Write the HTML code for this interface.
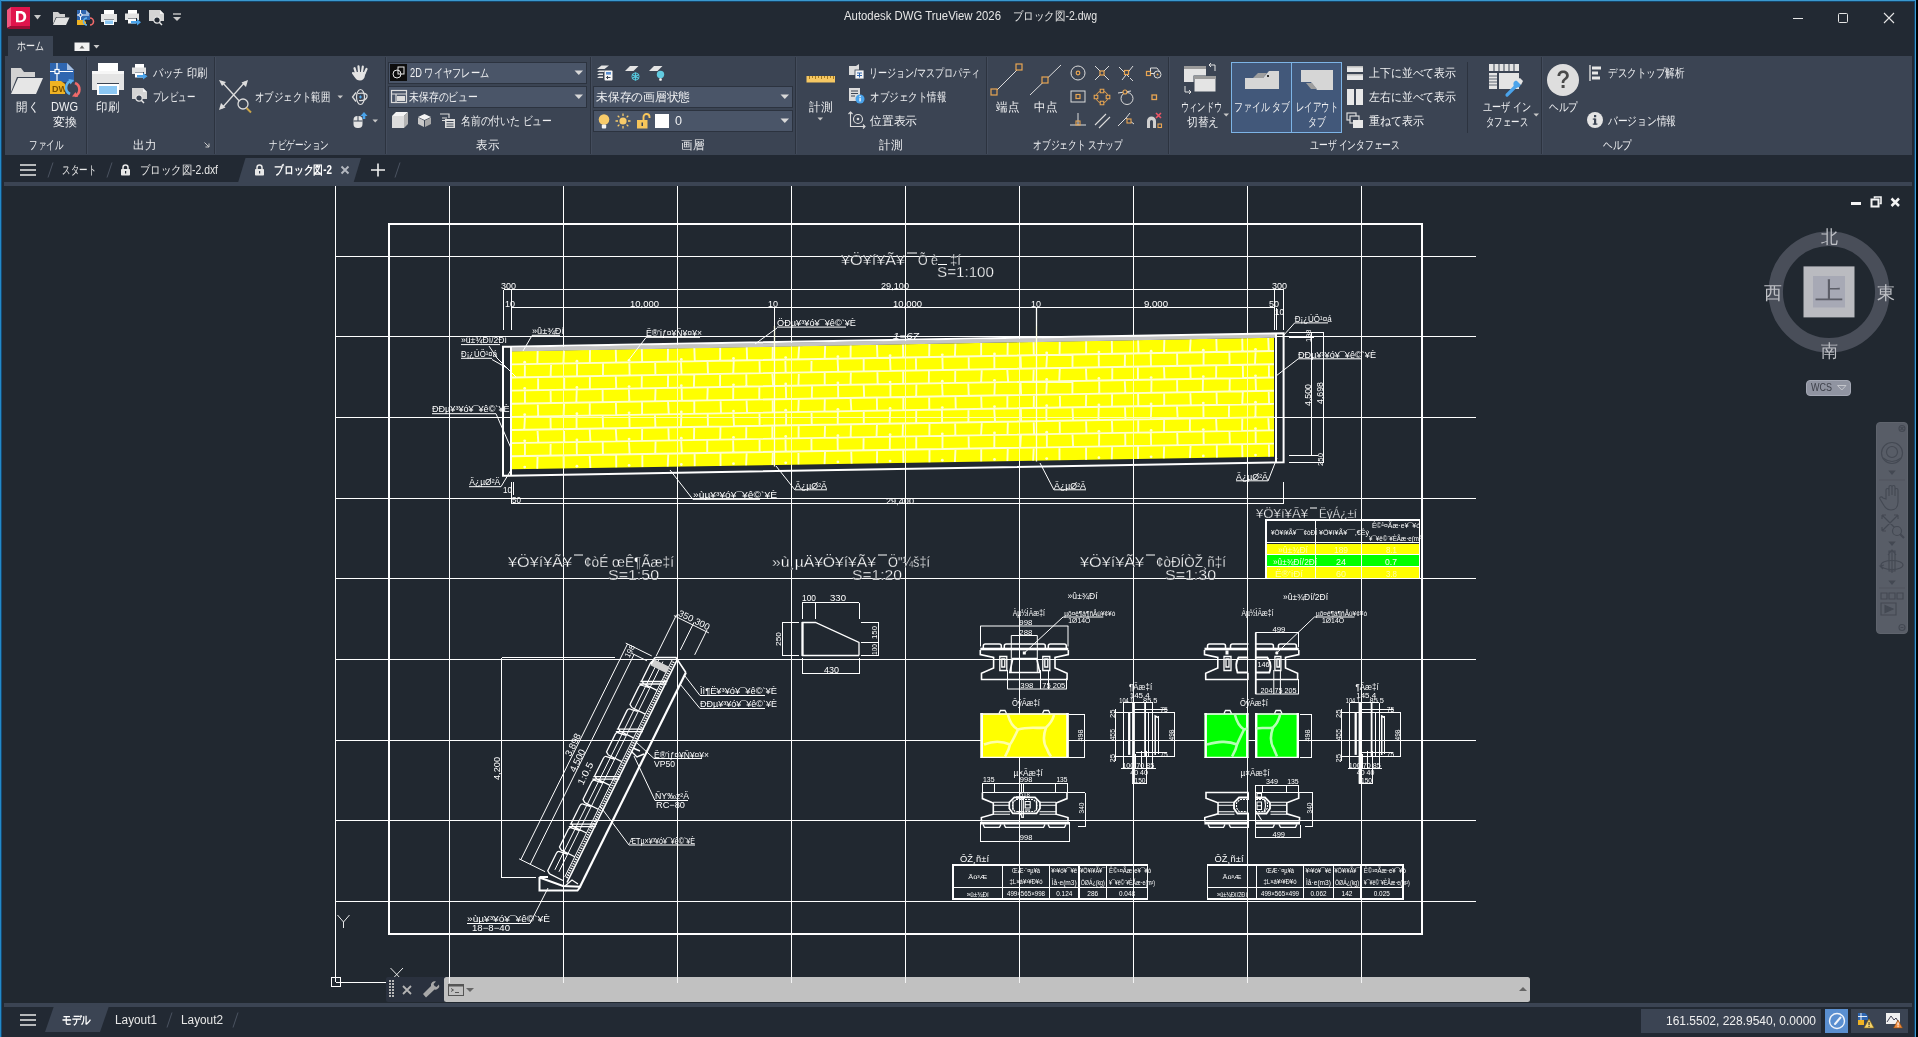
<!DOCTYPE html>
<html lang="ja"><head><meta charset="utf-8"><title>Autodesk DWG TrueView 2026 - ブロック図-2.dwg</title>
<style>
html,body{margin:0;padding:0;background:#000;overflow:hidden}
body{width:1918px;height:1037px;position:relative;font-family:"Liberation Sans",sans-serif;font-size:12px;color:#e4e6ea}
.a{position:absolute;display:block}
.t{position:absolute;display:block;white-space:nowrap;transform-origin:0 50%;letter-spacing:0}
#app{position:absolute;left:0;top:0;width:1918px;height:1037px;overflow:hidden;will-change:transform}
svg{overflow:visible}
svg text{white-space:pre}
</style></head><body><div id="app">
<div class="a" style="left:0px;top:0px;width:1916px;height:1037px;background:#222933;"></div>
<div class="a" style="left:1916px;top:0px;width:2px;height:1037px;background:#000;"></div>
<div class="a" style="left:0px;top:0px;width:1916px;height:1px;background:#3a98cf;"></div>
<div class="a" style="left:0px;top:1px;width:1916px;height:1px;background:#16456a;"></div>
<div class="a" style="left:0px;top:0px;width:1px;height:1037px;background:#2389c8;"></div>
<div class="a" style="left:1px;top:1px;width:1px;height:1036px;background:#154a72;"></div>
<div class="a" style="left:1915px;top:0px;width:1px;height:1037px;background:#3a98cf;"></div>
<div class="a" style="left:1914px;top:1px;width:1px;height:1036px;background:#16456a;"></div>
<svg class="a" style="left:6px;top:6px" width="28" height="24" viewBox="0 0 28 24"><path d="M1 4 L5 1 L5 20 L1 22Z" fill="#f0567f"/><path d="M5 1 H24 V20 H5Z" fill="#e0144c"/><path d="M1 22 L5 20 H24 L24 23 H3Z" fill="#a00c35"/><path d="M10 5 h4.2 c4 0 6 2.3 6 5.6 s-2 5.7-6 5.700 H10Z M12.600 7.400 v7 h1.500 c2.300 0 3.400-1.300 3.400-3.500 s-1.100-3.500-3.400-3.500Z" fill="#fff"/></svg>
<svg class="a" style="left:34px;top:15px" width="8" height="5" viewBox="0 0 8 5"><path d="M0 0 H7 L3.500 4.500Z" fill="#c8c8c8"/></svg>
<svg class="a" style="left:52px;top:11px" width="18" height="15" viewBox="0 0 18 15"><path d="M1 1 H6 L8 3 H13 V6 H4 L1 13Z" fill="#d0d0d0"/><path d="M4.500 6.500 H17.500 L14 14 H1Z" fill="#e2e2e2"/></svg>
<svg class="a" style="left:76px;top:9px" width="18" height="18" viewBox="0 0 18 18"><path d="M1 1 H10 L14 5 V11 H1Z" fill="#2f66b0"/><path d="M10 1 L14 5 H10Z" fill="#9ab6dc"/><path d="M1 11 H8 L10 13 V16 H1Z" fill="#f0b323"/><path d="M4.500 1 V11 M1 6 H13" stroke="#fff" stroke-width="1" fill="none"/><circle cx="4.500" cy="6" r="1.600" fill="#2f66b0" stroke="#fff"/><path d="M11 9 a3.500 3.500 0 0 0 0 7" stroke="#5db2ee" stroke-width="1.600" fill="none"/><path d="M14 9 a3.500 3.500 0 0 1 0 7" stroke="#f06a6a" stroke-width="1.600" fill="none"/></svg>
<svg class="a" style="left:100px;top:9px" width="18" height="18" viewBox="0 0 18 18"><rect x="4" y="1" width="10" height="5" fill="#fff"/><path d="M1 5 H17 V13 H14 V10 H4 V13 H1Z" fill="#e2e2e2"/><rect x="4" y="10.500" width="10" height="5.500" fill="#fff"/><rect x="5" y="11.500" width="8" height="3.500" fill="#8cc8f4"/></svg>
<svg class="a" style="left:124px;top:9px" width="20" height="18" viewBox="0 0 20 18"><rect x="4" y="1" width="9" height="4" fill="#fff"/><path d="M1 4.500 H15 V11 H13 V9 H4 V11 H1Z" fill="#e2e2e2"/><rect x="4" y="9.500" width="8" height="5" fill="#fff"/><path d="M7 12 H13 V10 L17 13.200 L13 16.500 V14.500 H7Z" fill="#4aa3ea"/></svg>
<svg class="a" style="left:148px;top:9px" width="18" height="18" viewBox="0 0 18 18"><path d="M1 1 H12 L16 5 V12 H1Z" fill="#d4d4d4"/><path d="M12 1 L16 5 H12Z" fill="#f4f4f4"/><circle cx="9" cy="11" r="3.200" fill="#222933" stroke="#e8e8e8" stroke-width="1.200"/><path d="M11.300 13.300 L14 16" stroke="#e8e8e8" stroke-width="1.500"/></svg>
<svg class="a" style="left:172px;top:13px" width="10" height="9" viewBox="0 0 10 9"><path d="M1 1 H9" stroke="#c8c8c8" stroke-width="1.400"/><path d="M1 4 H9 L5 8Z" fill="#c8c8c8"/></svg>
<svg class="a" style="left:1790px;top:10px" width="16" height="16" viewBox="0 0 16 16"><path d="M3 8.500 H13" stroke="#e6e6e6" stroke-width="1"/></svg>
<svg class="a" style="left:1835px;top:10px" width="16" height="16" viewBox="0 0 16 16"><rect x="3.500" y="3.500" width="9" height="9" rx="1" fill="none" stroke="#e6e6e6" stroke-width="1"/></svg>
<svg class="a" style="left:1881px;top:10px" width="16" height="16" viewBox="0 0 16 16"><path d="M3 3 L13 13 M13 3 L3 13" stroke="#e6e6e6" stroke-width="1.100"/></svg>
<div class="a" style="left:8px;top:36px;width:45px;height:20px;background:#3b4453;"></div>
<svg class="a" style="left:74px;top:42px" width="17" height="10" viewBox="0 0 17 10"><rect x="0.500" y="0.500" width="15" height="8.500" fill="#f2f2f2"/><path d="M5.500 6.500 L8 3.500 L10.500 6.500Z" fill="#666"/></svg>
<svg class="a" style="left:93px;top:45px" width="8" height="5" viewBox="0 0 8 5"><path d="M0.500 0 H6.500 L3.500 3.500Z" fill="#c8c8c8"/></svg>
<div class="a" style="left:5px;top:56px;width:1907px;height:99px;background:#3b4453;"></div>
<div class="a" style="left:86px;top:57px;width:1px;height:97px;background:#2c333f;"></div>
<div class="a" style="left:87px;top:57px;width:1px;height:97px;background:#434c5c;"></div>
<div class="a" style="left:214px;top:57px;width:1px;height:97px;background:#2c333f;"></div>
<div class="a" style="left:215px;top:57px;width:1px;height:97px;background:#434c5c;"></div>
<div class="a" style="left:385px;top:57px;width:1px;height:97px;background:#2c333f;"></div>
<div class="a" style="left:386px;top:57px;width:1px;height:97px;background:#434c5c;"></div>
<div class="a" style="left:590px;top:57px;width:1px;height:97px;background:#2c333f;"></div>
<div class="a" style="left:591px;top:57px;width:1px;height:97px;background:#434c5c;"></div>
<div class="a" style="left:795px;top:57px;width:1px;height:97px;background:#2c333f;"></div>
<div class="a" style="left:796px;top:57px;width:1px;height:97px;background:#434c5c;"></div>
<div class="a" style="left:986px;top:57px;width:1px;height:97px;background:#2c333f;"></div>
<div class="a" style="left:987px;top:57px;width:1px;height:97px;background:#434c5c;"></div>
<div class="a" style="left:1168px;top:57px;width:1px;height:97px;background:#2c333f;"></div>
<div class="a" style="left:1169px;top:57px;width:1px;height:97px;background:#434c5c;"></div>
<div class="a" style="left:1541px;top:57px;width:1px;height:97px;background:#2c333f;"></div>
<div class="a" style="left:1542px;top:57px;width:1px;height:97px;background:#434c5c;"></div>
<div class="a" style="left:1467px;top:62px;width:1px;height:71px;background:#2c333f;"></div>
<svg class="a" style="left:9px;top:64px" width="36" height="32" viewBox="0 0 36 32"><path d="M2 4 H12 L15 8 H26 V13 H8 L2 28Z" fill="#d2d2d2"/><path d="M9 14 H34 L27 30 H2Z" fill="#e6e6e6"/></svg>
<svg class="a" style="left:49px;top:62px" width="34" height="36" viewBox="0 0 34 36"><path d="M1 1 H18 L25 8 V20 H1Z" fill="#2f66b0"/><path d="M18 1 L25 8 H18Z" fill="#a9c0e0"/><path d="M8 1 V19 M1 9.500 H24" stroke="#fff" stroke-width="1.200" fill="none"/><rect x="6" y="7.500" width="4" height="4" fill="#2f66b0" stroke="#fff" stroke-width="1.200"/><path d="M1 19 H12 L16 22 V32 H1Z" fill="#f0b323"/><text x="3" y="29.500" font-family="Liberation Sans" font-weight="bold" font-size="9" fill="#7a5200">DW</text><path d="M22 19 a7 7 0 0 0 -1 13" stroke="#5db2ee" stroke-width="2.600" fill="none"/><path d="M19.500 17 L25 18 L21.500 22.500Z" fill="#5db2ee"/><path d="M26 21 a7 7 0 0 1 0 13" stroke="#f06a6a" stroke-width="2.600" fill="none"/><path d="M29 35 L23 34.500 L26.500 30Z" fill="#f06a6a"/></svg>
<svg class="a" style="left:91px;top:62px" width="34" height="34" viewBox="0 0 34 34"><rect x="7" y="1" width="20" height="10" fill="#fff"/><path d="M1 9 H33 V28 H28 V21 H6 V28 H1Z" fill="#e4e4e4"/><path d="M1 9 H33 V12 H1Z" fill="#f6f6f6"/><rect x="6" y="22" width="22" height="11" fill="#fff"/><rect x="8" y="24" width="18" height="8" fill="#8cc8f4"/></svg>
<svg class="a" style="left:131px;top:63px" width="18" height="18" viewBox="0 0 18 18"><rect x="4" y="1" width="9" height="4" fill="#fff"/><path d="M1 4.500 H15 V11 H13 V9 H4 V11 H1Z" fill="#e2e2e2"/><rect x="4" y="9.500" width="8" height="5" fill="#fff"/><path d="M6 12 H12 V10 L16.500 13.200 L12 16.500 V14.500 H6Z" fill="#4aa3ea"/></svg>
<svg class="a" style="left:131px;top:87px" width="18" height="18" viewBox="0 0 18 18"><path d="M1 1 H12 L16 5 V12 H1Z" fill="#d4d4d4"/><path d="M12 1 L16 5 H12Z" fill="#f4f4f4"/><circle cx="8" cy="11" r="3.200" fill="#3b4453" stroke="#e8e8e8" stroke-width="1.200"/><path d="M10.300 13.300 L13 16" stroke="#e8e8e8" stroke-width="1.500"/></svg>
<svg class="a" style="left:203px;top:141px" width="8" height="8" viewBox="0 0 8 8"><path d="M1.500 1.500 L6 6 M6 2.500 V6 H2.500" stroke="#c8c8c8" stroke-width="1" fill="none"/></svg>
<svg class="a" style="left:218px;top:78px" width="36" height="36" viewBox="0 0 36 36"><path d="M4 4 L24 26 M27 4 L4 30" stroke="#dcdcdc" stroke-width="1.300" fill="none"/><path d="M1 2 L8 4 L4 8Z M30 2 L28 9 L23.500 4.500Z M1 32 L3 25 L7.500 29.500Z" fill="#dcdcdc"/><circle cx="25" cy="26" r="5" fill="#3b4453" stroke="#dcdcdc" stroke-width="1.300"/><path d="M28.500 30 L33 34.500" stroke="#c9a44a" stroke-width="2"/></svg>
<svg class="a" style="left:337px;top:95px" width="7" height="5" viewBox="0 0 7 5"><path d="M0.500 0.500 H6 L3.200 3.500Z" fill="#c8c8c8"/></svg>
<svg class="a" style="left:351px;top:64px" width="18" height="18" viewBox="0 0 18 18"><g stroke="#e4e4e4" stroke-width="2.200" stroke-linecap="round"><path d="M5 9 L3.500 4.200 M8 8 L7.500 2.300 M11 8 L11.800 2.600 M13.500 9.500 L15.500 5"/></g><path d="M4 8 H14.500 L14 11.500 C13.500 15 11.500 16.500 9 16.500 C6.500 16.500 5 15.500 3.500 13 L1 9.500 C.7 8.300 2 7.600 3 8.600Z" fill="#e4e4e4"/></svg>
<svg class="a" style="left:351px;top:88px" width="18" height="18" viewBox="0 0 18 18"><path d="M5 4.500 L1.500 9 L5 13.500" fill="none" stroke="#dcdcdc" stroke-width="1.300"/><ellipse cx="9.500" cy="9" rx="4" ry="7.500" fill="none" stroke="#dcdcdc" stroke-width="1.200"/><path d="M7 5.500 Q17 4 16 9 Q15 13 8 12.500" fill="none" stroke="#dcdcdc" stroke-width="1.200"/><path d="M9.500 7.500 v3 M8 9 h3" stroke="#56a8e8" stroke-width="1"/></svg>
<svg class="a" style="left:351px;top:111px" width="18" height="18" viewBox="0 0 18 18"><rect x="2.500" y="5" width="9" height="12" rx="4" fill="#e4e4e4"/><path d="M7 5 V10 M2.500 10 H11.500" stroke="#3b4453" stroke-width="1"/><path d="M13 1 L16.500 5 H14.300 V8 H11.700 V5 H9.500Z" fill="#4aa3ea"/></svg>
<svg class="a" style="left:372px;top:119px" width="7" height="5" viewBox="0 0 7 5"><path d="M0.500 0.500 H6 L3.200 3.500Z" fill="#c8c8c8"/></svg>
<div class="a" style="left:388px;top:62px;width:199px;height:22px;background:#4a5568;border:1px solid #2c333f;box-sizing:border-box"></div>
<div class="a" style="left:388px;top:86px;width:199px;height:22px;background:#4a5568;border:1px solid #2c333f;box-sizing:border-box"></div>
<svg class="a" style="left:390px;top:64px" width="18" height="18" viewBox="0 0 18 18"><rect x="0" y="0" width="17" height="17" fill="#0d0d0d"/><circle cx="7" cy="10" r="4" fill="none" stroke="#e8e8e8" stroke-width="1"/><rect x="8" y="3" width="6" height="7" fill="none" stroke="#e8e8e8" stroke-width="1"/></svg>
<svg class="a" style="left:574px;top:70px" width="10" height="6" viewBox="0 0 10 6"><path d="M0.500 0.500 H9 L4.800 5Z" fill="#d8d8d8"/></svg>
<svg class="a" style="left:390px;top:88px" width="18" height="18" viewBox="0 0 18 18"><rect x="1.500" y="2.500" width="15" height="12" fill="none" stroke="#dcdcdc" stroke-width="1.200"/><path d="M1.500 6 H16.500 M6 6 V14.500" stroke="#dcdcdc" stroke-width="1.200"/><rect x="7" y="8" width="8" height="5" fill="#dcdcdc"/></svg>
<svg class="a" style="left:574px;top:94px" width="10" height="6" viewBox="0 0 10 6"><path d="M0.500 0.500 H9 L4.800 5Z" fill="#d8d8d8"/></svg>
<svg class="a" style="left:391px;top:111px" width="18" height="19" viewBox="0 0 18 19"><path d="M1 5 L5 1 H17 L13 5Z" fill="#f4f4f4"/><rect x="1" y="5" width="12" height="12" fill="#dcdcdc"/><path d="M13 5 L17 1 V13 L13 17Z" fill="#b4b4b4"/></svg>
<svg class="a" style="left:417px;top:113px" width="15" height="15" viewBox="0 0 15 15"><path d="M7.500 1 L14 4 L7.500 7 L1 4Z" fill="#f4f4f4"/><path d="M1 4.500 L7 7.500 V14 L1 11Z" fill="#c8c8c8"/><path d="M14 4.500 L8 7.500 V14 L14 11Z" fill="#a8a8a8"/></svg>
<svg class="a" style="left:439px;top:113px" width="17" height="16" viewBox="0 0 17 16"><path d="M1 1 H10 V5" fill="none" stroke="#dcdcdc" stroke-width="1.200"/><path d="M3 5 H8 M3 7.500 H6" stroke="#dcdcdc" stroke-width="1"/><rect x="6" y="6" width="10" height="9" fill="#dcdcdc"/><path d="M7.500 8.500 H14.500 M7.500 11 H14.500 M7.500 13.200 H14.500" stroke="#3b4453" stroke-width="1"/></svg>
<svg class="a" style="left:595px;top:64px" width="18" height="18" viewBox="0 0 18 18"><path d="M2 5 L6.500 1.500 H14 L9.500 5Z" fill="#e4e4e4"/><path d="M2 8 L4 6.500 H10 L9 8Z M2 11 L4 9.500 H8 L8 11Z M2 14 L4 12.500 H8 V14Z" fill="#e4e4e4"/><rect x="9.500" y="6.500" width="8" height="10" rx="1" fill="#f6f6f6"/><rect x="11" y="8" width="5" height="2.600" fill="#5b8fd0"/><path d="M15.500 13.500 H11.500 M13 12 L11.500 13.500 L13 15" stroke="#3b4453" stroke-width="1" fill="none"/></svg>
<svg class="a" style="left:623px;top:64px" width="18" height="18" viewBox="0 0 18 18"><path d="M2 7 L7 2 H15.500 L10.500 7Z" fill="#e4e4e4"/><g stroke="#56c8de" stroke-width="1.300"><path d="M12.500 8.500 v8 M9 10.500 l7 4 M16 10.500 l-7 4"/></g><circle cx="12.500" cy="12.500" r="3.600" fill="none" stroke="#56c8de" stroke-width=".9"/></svg>
<svg class="a" style="left:648px;top:64px" width="18" height="18" viewBox="0 0 18 18"><path d="M1 7 L6 2 H14.500 L9.500 7Z" fill="#e4e4e4"/><circle cx="12.500" cy="10.500" r="3.700" fill="#62cbe0"/><rect x="11.200" y="14.200" width="2.600" height="2.600" rx=".8" fill="#f4f4f4"/></svg>
<div class="a" style="left:593px;top:86px;width:200px;height:22px;background:#4a5568;border:1px solid #2c333f;box-sizing:border-box"></div>
<svg class="a" style="left:780px;top:94px" width="10" height="6" viewBox="0 0 10 6"><path d="M0.500 0.500 H9 L4.800 5Z" fill="#d8d8d8"/></svg>
<div class="a" style="left:593px;top:110px;width:200px;height:22px;background:#4a5568;border:1px solid #2c333f;box-sizing:border-box"></div>
<svg class="a" style="left:597px;top:112px" width="14" height="18" viewBox="0 0 14 18"><circle cx="7" cy="7.500" r="5.300" fill="#f8cb6a"/><rect x="4.800" y="12.500" width="4.400" height="4" rx="1" fill="#f4f4f4"/></svg>
<svg class="a" style="left:614px;top:112px" width="18" height="18" viewBox="0 0 18 18"><circle cx="9" cy="9" r="3.600" fill="#f8cb6a"/><path d="M9 1.500 V4 M9 14 V16.500 M1.500 9 H4 M14 9 H16.500 M3.700 3.700 L5.400 5.400 M12.600 12.600 L14.300 14.300 M14.300 3.700 L12.600 5.400 M3.700 14.300 L5.400 12.600" stroke="#f8cb6a" stroke-width="1.300"/></svg>
<svg class="a" style="left:635px;top:112px" width="16" height="18" viewBox="0 0 16 18"><path d="M8.500 8 V5 a3 3 0 0 1 6 0 V6" fill="none" stroke="#f8c65a" stroke-width="1.900"/><rect x="2" y="8" width="10.500" height="8.500" fill="#f8c65a"/><rect x="6.500" y="10.500" width="1.500" height="3.500" fill="#3b4453"/></svg>
<div class="a" style="left:655px;top:114px;width:14px;height:14px;background:#fff;"></div>
<svg class="a" style="left:780px;top:118px" width="10" height="6" viewBox="0 0 10 6"><path d="M0.500 0.500 H9 L4.800 5Z" fill="#d8d8d8"/></svg>
<svg class="a" style="left:805px;top:72px" width="32" height="14" viewBox="0 0 32 14"><rect x="1.500" y="4" width="28.500" height="6.500" fill="#f6c863"/><path d="M4.500 4 V7 M7.500 4 V6 M10.500 4 V7 M13.500 4 V6 M16.500 4 V7 M19.500 4 V6 M22.500 4 V7 M25.500 4 V6 M28.500 4 V7" stroke="#a87c1c" stroke-width="1"/></svg>
<svg class="a" style="left:817px;top:117px" width="7" height="5" viewBox="0 0 7 5"><path d="M0.500 0.500 H6 L3.200 3.500Z" fill="#c8c8c8"/></svg>
<svg class="a" style="left:848px;top:63px" width="18" height="18" viewBox="0 0 18 18"><path d="M1 3 H8 L11 1 V12 H1Z" fill="#dcdcdc"/><rect x="7" y="7" width="9" height="9" fill="#f4f4f4" stroke="#3b4453" stroke-width=".8"/><path d="M9 10 H14 M9 12.500 H14 M11.500 10 V14.500" stroke="#2f66b0" stroke-width="1"/></svg>
<svg class="a" style="left:848px;top:87px" width="18" height="18" viewBox="0 0 18 18"><rect x="1" y="1" width="11" height="13" fill="#dcdcdc"/><path d="M3 4 H10 M3 6.500 H10 M3 9 H7" stroke="#3b4453" stroke-width="1"/><circle cx="12" cy="12" r="4.500" fill="#4aa3ea"/><rect x="11.400" y="10.800" width="1.300" height="3.600" fill="#fff"/><rect x="11.400" y="8.800" width="1.300" height="1.300" fill="#fff"/></svg>
<svg class="a" style="left:848px;top:111px" width="18" height="18" viewBox="0 0 18 18"><path d="M2.500 1 V15.500 H17 M0.500 3 L2.500 1 L4.500 3 M15 13.500 L17 15.500 L15 17.500" fill="none" stroke="#dcdcdc" stroke-width="1.100"/><circle cx="10" cy="8" r="4.500" fill="none" stroke="#dcdcdc" stroke-width="1.100"/><circle cx="10" cy="8" r="1.300" fill="#dcdcdc"/></svg>
<svg class="a" style="left:989px;top:62px" width="36" height="36" viewBox="0 0 36 36"><path d="M6 30 L30 6" stroke="#dcdcdc" stroke-width="1"/><rect x="27" y="2" width="6" height="6" fill="#3b4453" stroke="#e8a552" stroke-width="1.200"/><rect x="2" y="27" width="6" height="6" fill="#3b4453" stroke="#e8a552" stroke-width="1.200"/></svg>
<svg class="a" style="left:1028px;top:62px" width="36" height="36" viewBox="0 0 36 36"><path d="M2 33 L33 3" stroke="#dcdcdc" stroke-width="1"/><rect x="14" y="15" width="6" height="6" fill="#3b4453" stroke="#e8a552" stroke-width="1.200"/></svg>
<svg class="a" style="left:1069px;top:64px" width="18" height="18" viewBox="0 0 18 18"><circle cx="9" cy="9" r="7" fill="none" stroke="#dcdcdc"/><circle cx="9" cy="9" r="1.800" fill="none" stroke="#e8a552" stroke-width="1.200"/></svg>
<svg class="a" style="left:1093px;top:64px" width="18" height="18" viewBox="0 0 18 18"><path d="M2 2 L16 16 M16 2 L2 16" stroke="#dcdcdc"/><rect x="7" y="7" width="4" height="4" fill="#3b4453" stroke="#e8a552" stroke-width="1.200"/></svg>
<svg class="a" style="left:1117px;top:64px" width="18" height="18" viewBox="0 0 18 18"><path d="M2 3 L12 13 M16 2 L5 16 M13 14 L16 17" stroke="#dcdcdc" stroke-dasharray="0"/><rect x="7.500" y="6.500" width="4" height="4" fill="#3b4453" stroke="#e8a552" stroke-width="1.200"/></svg>
<svg class="a" style="left:1145px;top:64px" width="18" height="18" viewBox="0 0 18 18"><rect x="1.500" y="7.500" width="4" height="4" fill="none" stroke="#e8a552" stroke-width="1.200"/><path d="M5.500 7.500 V4 H12 L15 8 M5.500 9.500 H9" stroke="#dcdcdc" fill="none"/><circle cx="12.500" cy="10.500" r="3.500" fill="none" stroke="#dcdcdc"/><circle cx="12.500" cy="10.500" r="1" fill="#e8a552"/></svg>
<svg class="a" style="left:1069px;top:88px" width="18" height="18" viewBox="0 0 18 18"><rect x="2" y="3" width="14" height="11" fill="none" stroke="#dcdcdc"/><rect x="7" y="6.500" width="4" height="4" fill="none" stroke="#e8a552" stroke-width="1.200"/></svg>
<svg class="a" style="left:1093px;top:88px" width="18" height="18" viewBox="0 0 18 18"><circle cx="9" cy="9" r="6" fill="none" stroke="#e8a552"/><g fill="#3b4453" stroke="#e8a552" stroke-width="1.100"><path d="M7.200 1.200h3.600v3.600h-3.600zM7.200 13.200h3.600v3.600h-3.600zM1.200 7.200h3.600v3.600h-3.600zM13.200 7.200h3.600v3.600h-3.600z"/></g></svg>
<svg class="a" style="left:1117px;top:88px" width="18" height="18" viewBox="0 0 18 18"><circle cx="10" cy="10.500" r="6" fill="none" stroke="#dcdcdc"/><path d="M1 5 L14 3" stroke="#dcdcdc"/><circle cx="8" cy="4" r="2" fill="#3b4453" stroke="#e8a552" stroke-width="1.100"/></svg>
<svg class="a" style="left:1145px;top:88px" width="18" height="18" viewBox="0 0 18 18"><rect x="7" y="7" width="4.500" height="4.500" fill="none" stroke="#e8a552" stroke-width="1.300"/></svg>
<svg class="a" style="left:1069px;top:112px" width="18" height="18" viewBox="0 0 18 18"><path d="M9 1 V13 M1 13 H17" stroke="#dcdcdc"/><rect x="7" y="9" width="4" height="4" fill="none" stroke="#e8a552" stroke-width="1.100"/></svg>
<svg class="a" style="left:1093px;top:112px" width="18" height="18" viewBox="0 0 18 18"><path d="M2 13 L13 2 M6 16 L17 5" stroke="#dcdcdc" stroke-width="1.100"/></svg>
<svg class="a" style="left:1117px;top:112px" width="18" height="18" viewBox="0 0 18 18"><path d="M1 14 L9 6 L17 12 M9 6 L13 1" stroke="#dcdcdc" fill="none"/><rect x="10" y="7" width="4" height="4" fill="#3b4453" stroke="#e8a552" stroke-width="1.100"/></svg>
<svg class="a" style="left:1145px;top:112px" width="18" height="18" viewBox="0 0 18 18"><path d="M2 16 V9 a4.500 4.500 0 0 1 9 0 V16 H8 V9.500 a1.500 1.500 0 0 0 -3 0 V16Z" fill="#d0d0d0"/><path d="M11 1 L16 6 M16 1 L11 6" stroke="#ee5566" stroke-width="1.600"/><rect x="13" y="12" width="3.500" height="3.500" fill="none" stroke="#e8a552" stroke-width="1.100"/></svg>
<svg class="a" style="left:1183px;top:63px" width="36" height="34" viewBox="0 0 36 34"><rect x="1" y="3" width="22" height="16" fill="#e4e4e4"/><rect x="1" y="3" width="22" height="3" fill="#9a9a9a"/><rect x="11" y="13" width="22" height="16" fill="#e4e4e4" stroke="#3b4453" stroke-width="1"/><rect x="11" y="13" width="22" height="3" fill="#9a9a9a"/><path d="M26 2 H32 V8 M28 0 L26 2 L28 4" stroke="#e4e4e4" fill="none"/><path d="M2 23 V29 H8 M6 27 L8 29 L6 31" stroke="#e4e4e4" fill="none"/></svg>
<svg class="a" style="left:1223px;top:113px" width="7" height="5" viewBox="0 0 7 5"><path d="M0.500 0.500 H6 L3.200 3.500Z" fill="#c8c8c8"/></svg>
<div class="a" style="left:1231px;top:62px;width:61px;height:71px;background:#42587a;border:1px solid #7db4e6;box-sizing:border-box"></div>
<div class="a" style="left:1292px;top:62px;width:50px;height:71px;background:#42587a;border:1px solid #7db4e6;border-left:none;box-sizing:border-box"></div>
<svg class="a" style="left:1243px;top:68px" width="38" height="24" viewBox="0 0 38 24"><path d="M2 21 V10 H20 L26 3 H36 V21Z" fill="#d6d6d6"/><path d="M10 10 L15 5 H24 L20 10Z" fill="#9e9e9e"/><rect x="24" y="7" width="2" height="2" fill="#333"/></svg>
<svg class="a" style="left:1299px;top:68px" width="38" height="24" viewBox="0 0 38 24"><path d="M2 2 H34 V22 H18 L12 14 H2Z" fill="#d6d6d6"/><path d="M7 15 H13 L18 21 H12Z" fill="#9e9e9e"/></svg>
<svg class="a" style="left:1346px;top:64px" width="18" height="18" viewBox="0 0 18 18"><rect x="1" y="2" width="16" height="6" fill="#e8e8e8"/><rect x="1" y="10" width="16" height="6" fill="#e8e8e8"/><rect x="1" y="2" width="16" height="1.500" fill="#bdbdbd"/><rect x="1" y="10" width="16" height="1.500" fill="#bdbdbd"/></svg>
<svg class="a" style="left:1346px;top:88px" width="18" height="18" viewBox="0 0 18 18"><rect x="1" y="1" width="7" height="16" fill="#e8e8e8"/><rect x="10" y="1" width="7" height="16" fill="#e8e8e8"/></svg>
<svg class="a" style="left:1346px;top:112px" width="18" height="18" viewBox="0 0 18 18"><rect x="1" y="1" width="9" height="7" fill="none" stroke="#dcdcdc" stroke-width="1.200"/><rect x="4" y="4" width="9" height="7" fill="#3b4453" stroke="#dcdcdc" stroke-width="1.200"/><rect x="7" y="8" width="10" height="8" fill="#e8e8e8"/></svg>
<svg class="a" style="left:1487px;top:62px" width="38" height="36" viewBox="0 0 38 36"><rect x="2" y="2" width="30" height="7" fill="#e4e4e4"/><path d="M7 2 V9 M12 2 V9 M17 2 V9 M22 2 V9 M27 2 V9" stroke="#3b4453"/><rect x="2" y="11" width="8" height="16" fill="#e4e4e4"/><path d="M2 14 H10 M2 17 H10 M2 20 H10 M2 23 H10" stroke="#3b4453" stroke-width=".8"/><rect x="12" y="11" width="20" height="16" fill="#e4e4e4"/><path d="M20 33 L29 24" stroke="#4aa3ea" stroke-width="3.200" stroke-linecap="round"/><circle cx="30" cy="22" r="3.600" fill="#4aa3ea"/><path d="M29 18 L34 23 L36 19 L33 16Z" fill="#e4e4e4"/></svg>
<svg class="a" style="left:1533px;top:113px" width="7" height="5" viewBox="0 0 7 5"><path d="M0.500 0.500 H6 L3.200 3.500Z" fill="#c8c8c8"/></svg>
<svg class="a" style="left:1546px;top:63px" width="34" height="34" viewBox="0 0 34 34"><circle cx="17" cy="17" r="16" fill="#dedede"/><path d="M11.500 13 c0-3.500 2.500-5.500 5.700-5.500 c3.300 0 5.600 2 5.600 5 c0 2.200-1.200 3.300-2.700 4.300 c-1.400 1-1.800 1.600-1.800 3.200 h-2.600 c0-2.300.6-3.300 2.200-4.500 c1.400-1 2.100-1.600 2.100-2.900 c0-1.600-1.100-2.600-2.800-2.600 c-1.800 0-2.900 1.100-3 3Z M15.600 22 h3 v3 h-3Z" fill="#4a4a4a"/></svg>
<svg class="a" style="left:1588px;top:64px" width="16" height="18" viewBox="0 0 16 18"><path d="M2 1 V17" stroke="#dcdcdc" stroke-width="1.400"/><rect x="4" y="2.500" width="9" height="3" fill="#e8e8e8"/><rect x="4" y="7.500" width="6" height="3" fill="#e8e8e8"/><rect x="4" y="12.500" width="8" height="3" fill="#e8e8e8"/></svg>
<svg class="a" style="left:1586px;top:111px" width="18" height="18" viewBox="0 0 18 18"><circle cx="9" cy="9" r="8" fill="#e4e4e4"/><rect x="8" y="7.500" width="2.200" height="6" fill="#3b4453"/><rect x="8" y="4" width="2.200" height="2.200" fill="#3b4453"/><rect x="6.800" y="7.500" width="2" height="1.200" fill="#3b4453"/><rect x="6.800" y="12.500" width="4.600" height="1.200" fill="#3b4453"/></svg>
<svg class="a" style="left:18px;top:162px" width="20" height="16" viewBox="0 0 20 16"><path d="M2 3 H18 M2 8 H18 M2 13 H18" stroke="#e8e8e8" stroke-width="1.700"/></svg>
<svg class="a" style="left:44px;top:158px" width="12" height="24" viewBox="0 0 12 24"><path d="M9 4.500 L4 19.500" stroke="#4b5361" stroke-width="1"/></svg>
<svg class="a" style="left:103px;top:158px" width="12" height="24" viewBox="0 0 12 24"><path d="M9 4.500 L4 19.500" stroke="#4b5361" stroke-width="1"/></svg>
<svg class="a" style="left:120px;top:163px" width="11" height="13" viewBox="0 0 11 13"><path d="M3 6 V4.500 a2.500 2.500 0 0 1 5 0 V6" fill="none" stroke="#e8e8e8" stroke-width="1.500"/><rect x="1" y="6" width="9" height="6.500" rx=".8" fill="#e8e8e8"/><rect x="5" y="8" width="1.200" height="2.500" fill="#222933"/></svg>
<svg class="a" style="left:232px;top:155px" width="134" height="31" viewBox="0 0 134 31"><path d="M5 31 L13.500 3 H129 L120.500 31Z" fill="#3b4453"/></svg>
<svg class="a" style="left:254px;top:163px" width="11" height="13" viewBox="0 0 11 13"><path d="M3 6 V4.500 a2.500 2.500 0 0 1 5 0 V6" fill="none" stroke="#e8e8e8" stroke-width="1.500"/><rect x="1" y="6" width="9" height="6.500" rx=".8" fill="#e8e8e8"/><rect x="5" y="8" width="1.200" height="2.500" fill="#3b4453"/></svg>
<svg class="a" style="left:339px;top:164px" width="12" height="12" viewBox="0 0 12 12"><path d="M2.500 2.500 L9.500 9.500 M9.500 2.500 L2.500 9.500" stroke="#b4b8c0" stroke-width="1.900"/></svg>
<svg class="a" style="left:369px;top:162px" width="18" height="16" viewBox="0 0 18 16"><path d="M9 1.500 V14.500 M2 8 H16" stroke="#f0f0f0" stroke-width="1.600"/></svg>
<svg class="a" style="left:391px;top:158px" width="12" height="24" viewBox="0 0 12 24"><path d="M9 4.500 L4 19.500" stroke="#4b5361" stroke-width="1"/></svg>
<div class="a" style="left:4px;top:182px;width:1908px;height:4px;background:#3b4453;"></div>
<div class="a" style="left:2px;top:186px;width:1912px;height:817px;background:#212830;"></div>
<div class="a" style="left:4px;top:1003px;width:1908px;height:4px;background:#3b4453;"></div>
<svg class="a" style="left:18px;top:1012px" width="20" height="16" viewBox="0 0 20 16"><path d="M2 3 H18 M2 8 H18 M2 13 H18" stroke="#e8e8e8" stroke-width="1.700"/></svg>
<svg class="a" style="left:42px;top:1005px" width="70" height="28" viewBox="0 0 70 28"><path d="M3 27 L12 1 H67 L58 27Z" fill="#3b4453"/></svg>
<svg class="a" style="left:163px;top:1008px" width="12" height="24" viewBox="0 0 12 24"><path d="M9 4.500 L4 19.500" stroke="#4b5361" stroke-width="1"/></svg>
<svg class="a" style="left:229px;top:1008px" width="12" height="24" viewBox="0 0 12 24"><path d="M9 4.500 L4 19.500" stroke="#4b5361" stroke-width="1"/></svg>
<div class="a" style="left:1641px;top:1009px;width:180px;height:24px;background:#3b4453;"></div>
<div class="a" style="left:1825px;top:1009px;width:23px;height:24px;background:#5a8fd0;"></div>
<svg class="a" style="left:1827px;top:1011px" width="20" height="20" viewBox="0 0 20 20"><circle cx="10" cy="10" r="7.500" fill="none" stroke="#f0f4fa" stroke-width="1.400"/><path d="M8 13 L13.500 6.500" stroke="#f0f4fa" stroke-width="2" stroke-linecap="round"/></svg>
<div class="a" style="left:1851px;top:1009px;width:57px;height:24px;background:#3b4453;"></div>
<svg class="a" style="left:1856px;top:1011px" width="20" height="20" viewBox="0 0 20 20"><path d="M2 2 H9 L12 5 V9 H2Z" fill="#2f66b0"/><path d="M2 9 H8 V14 H2Z" fill="#f0b323"/><path d="M5 2 V9 M2 5.500 H11" stroke="#fff" stroke-width=".9"/><path d="M13 8 L18 17 H8Z" fill="#f6d36a" stroke="#8a6a10" stroke-width=".6"/><rect x="12.500" y="11" width="1.100" height="3.200" fill="#333"/><rect x="12.500" y="15" width="1.100" height="1.100" fill="#333"/></svg>
<svg class="a" style="left:1884px;top:1011px" width="20" height="20" viewBox="0 0 20 20"><rect x="2" y="2" width="14" height="11" fill="#f0f0f0"/><path d="M3 11 L7 5 L10 9 L12 7 L15 12" stroke="#445" fill="none"/><path d="M14 9 L18.500 17 H9.500Z" fill="#f08a3c" stroke="#8a4a10" stroke-width=".6"/><rect x="13.500" y="11.500" width="1.100" height="3" fill="#fff"/><rect x="13.500" y="15.200" width="1.100" height="1" fill="#fff"/></svg>
<svg class="a" style="left:0;top:0" width="1918" height="1037" viewBox="0 0 1918 1037" font-family="'Liberation Sans',sans-serif"><text x="844" y="20.16" font-size="12" fill="#e6e6e6" textLength="157" lengthAdjust="spacingAndGlyphs">Autodesk DWG TrueView 2026</text><text x="1013" y="20.16" font-size="12" fill="#e6e6e6" textLength="84" lengthAdjust="spacingAndGlyphs">ブロック図-2.dwg</text><text x="17" y="50.16" font-size="12" fill="#f0f0f0" textLength="27" lengthAdjust="spacingAndGlyphs">ホーム</text><text x="16" y="110.66" font-size="12" fill="#f0f1f3" textLength="23" lengthAdjust="spacingAndGlyphs">開く</text><text x="51" y="110.66" font-size="12" fill="#f0f1f3" textLength="27" lengthAdjust="spacingAndGlyphs">DWG</text><text x="53" y="125.66" font-size="12" fill="#f0f1f3" textLength="24" lengthAdjust="spacingAndGlyphs">変換</text><text x="29" y="148.66" font-size="12" fill="#f0f1f3" textLength="34" lengthAdjust="spacingAndGlyphs">ファイル</text><text x="96" y="110.66" font-size="12" fill="#f0f1f3" textLength="23" lengthAdjust="spacingAndGlyphs">印刷</text><text x="153" y="76.66" font-size="12" fill="#f0f1f3" textLength="54" lengthAdjust="spacingAndGlyphs">バッチ 印刷</text><text x="153" y="100.66" font-size="12" fill="#f0f1f3" textLength="42" lengthAdjust="spacingAndGlyphs">プレビュー</text><text x="133" y="148.66" font-size="12" fill="#f0f1f3" textLength="23" lengthAdjust="spacingAndGlyphs">出力</text><text x="255" y="100.66" font-size="12" fill="#f0f1f3" textLength="75" lengthAdjust="spacingAndGlyphs">オブジェクト範囲</text><text x="269" y="148.66" font-size="12" fill="#f0f1f3" textLength="60" lengthAdjust="spacingAndGlyphs">ナビゲーション</text><text x="410" y="76.66" font-size="12" fill="#f0f1f3" textLength="79" lengthAdjust="spacingAndGlyphs">2D ワイヤフレーム</text><text x="409" y="100.66" font-size="12" fill="#f0f1f3" textLength="69" lengthAdjust="spacingAndGlyphs">未保存のビュー</text><text x="461" y="124.66" font-size="12" fill="#f0f1f3" textLength="91" lengthAdjust="spacingAndGlyphs">名前の付いた ビュー</text><text x="476" y="148.66" font-size="12" fill="#f0f1f3" textLength="23" lengthAdjust="spacingAndGlyphs">表示</text><text x="596" y="100.66" font-size="12" fill="#f0f1f3" textLength="94" lengthAdjust="spacingAndGlyphs">未保存の画層状態</text><text x="675" y="125.16" font-size="12" fill="#f0f1f3" textLength="7" lengthAdjust="spacingAndGlyphs">0</text><text x="681" y="148.66" font-size="12" fill="#f0f1f3" textLength="23" lengthAdjust="spacingAndGlyphs">画層</text><text x="809" y="110.66" font-size="12" fill="#f0f1f3" textLength="23" lengthAdjust="spacingAndGlyphs">計測</text><text x="869" y="76.66" font-size="12" fill="#f0f1f3" textLength="111" lengthAdjust="spacingAndGlyphs">リージョン/マスプロパティ</text><text x="870" y="100.66" font-size="12" fill="#f0f1f3" textLength="76" lengthAdjust="spacingAndGlyphs">オブジェクト情報</text><text x="870" y="124.66" font-size="12" fill="#f0f1f3" textLength="47" lengthAdjust="spacingAndGlyphs">位置表示</text><text x="879" y="148.66" font-size="12" fill="#f0f1f3" textLength="23" lengthAdjust="spacingAndGlyphs">計測</text><text x="996" y="110.66" font-size="12" fill="#f0f1f3" textLength="23" lengthAdjust="spacingAndGlyphs">端点</text><text x="1034" y="110.66" font-size="12" fill="#f0f1f3" textLength="23" lengthAdjust="spacingAndGlyphs">中点</text><text x="1033" y="148.66" font-size="12" fill="#f0f1f3" textLength="90" lengthAdjust="spacingAndGlyphs">オブジェクト スナップ</text><text x="1181" y="110.66" font-size="12" fill="#f0f1f3" textLength="41" lengthAdjust="spacingAndGlyphs">ウィンドウ</text><text x="1187" y="125.66" font-size="12" fill="#f0f1f3" textLength="32" lengthAdjust="spacingAndGlyphs">切替え</text><text x="1234" y="110.66" font-size="12" fill="#f0f1f3" textLength="56" lengthAdjust="spacingAndGlyphs">ファイル タブ</text><text x="1296" y="110.66" font-size="12" fill="#f0f1f3" textLength="42" lengthAdjust="spacingAndGlyphs">レイアウト</text><text x="1308" y="125.66" font-size="12" fill="#f0f1f3" textLength="18" lengthAdjust="spacingAndGlyphs">タブ</text><text x="1369" y="76.66" font-size="12" fill="#f0f1f3" textLength="87" lengthAdjust="spacingAndGlyphs">上下に並べて表示</text><text x="1369" y="100.66" font-size="12" fill="#f0f1f3" textLength="87" lengthAdjust="spacingAndGlyphs">左右に並べて表示</text><text x="1369" y="124.66" font-size="12" fill="#f0f1f3" textLength="55" lengthAdjust="spacingAndGlyphs">重ねて表示</text><text x="1483" y="110.66" font-size="12" fill="#f0f1f3" textLength="48" lengthAdjust="spacingAndGlyphs">ユーザ イン</text><text x="1486" y="125.66" font-size="12" fill="#f0f1f3" textLength="42" lengthAdjust="spacingAndGlyphs">タフェース</text><text x="1310" y="148.66" font-size="12" fill="#f0f1f3" textLength="90" lengthAdjust="spacingAndGlyphs">ユーザ インタフェース</text><text x="1549" y="110.66" font-size="12" fill="#f0f1f3" textLength="29" lengthAdjust="spacingAndGlyphs">ヘルプ</text><text x="1608" y="76.66" font-size="12" fill="#f0f1f3" textLength="76" lengthAdjust="spacingAndGlyphs">デスクトップ解析</text><text x="1608" y="124.66" font-size="12" fill="#f0f1f3" textLength="68" lengthAdjust="spacingAndGlyphs">バージョン情報</text><text x="1603" y="148.66" font-size="12" fill="#f0f1f3" textLength="29" lengthAdjust="spacingAndGlyphs">ヘルプ</text><text x="62" y="173.66" font-size="12" fill="#e8e8e8" textLength="34" lengthAdjust="spacingAndGlyphs">スタート</text><text x="140" y="173.66" font-size="12" fill="#e8e8e8" textLength="78" lengthAdjust="spacingAndGlyphs">ブロック図-2.dxf</text><text x="274" y="173.66" font-size="12" fill="#ffffff" font-weight="bold" textLength="58" lengthAdjust="spacingAndGlyphs">ブロック図-2</text><text x="62" y="1024.16" font-size="12" fill="#ffffff" font-weight="bold" textLength="29" lengthAdjust="spacingAndGlyphs">モデル</text><text x="115" y="1024.16" font-size="12" fill="#e8e8e8" textLength="42" lengthAdjust="spacingAndGlyphs">Layout1</text><text x="181" y="1024.16" font-size="12" fill="#e8e8e8" textLength="42" lengthAdjust="spacingAndGlyphs">Layout2</text><text x="1666" y="1025.16" font-size="12" fill="#f0f0f0" textLength="150" lengthAdjust="spacingAndGlyphs">161.5502, 228.9540, 0.0000</text></svg>
<svg class="a" style="left:0;top:0" width="1918" height="1037" viewBox="0 0 1918 1037" font-family="'Liberation Sans',sans-serif">
<g shape-rendering="crispEdges"><path d="M335.5 186V982M449.5 186V982.5M563.5 186V982.5M677.5 186V982.5M791.5 186V982.5M905.5 186V982.5M1019.5 186V982.5M1133.5 186V982.5M1247.5 186V982.5M1361.5 186V982.5M335 256.5H1476M335 336.5H1476M335 417.5H1476M335 498.5H1476M335 578.5H1476M335 659.5H1476M335 740.5H1476M335 820.5H1476M335 901.5H1476" stroke="#ffffff" stroke-width="1" fill="none" />
<path d="M389 224H1422V934H389Z" stroke="#ffffff" stroke-width="2" fill="none" />
</g>
<defs><clipPath id="wc"><path d="M512 351.3L1274 337.8L1274 456.8L512 469.3Z"/></clipPath></defs>
<path d="M512 351.3L1274 337.8L1274 456.8L512 469.3Z" fill="#ffff00"/>
<g clip-path="url(#wc)"><path d="M512 364.41L1274 351.02M512 377.52L1274 364.24M512 390.63L1274 377.47M512 403.74L1274 390.69M512 416.86L1274 403.91M512 429.97L1274 417.13M512 443.08L1274 430.36M512 456.19L1274 443.58M537.66 350.84L537.38 363.96M564.02 350.38L563.39 363.5M590.03 349.92L589.84 363.04M615.75 349.46L616.11 362.58M641.83 348.99L642.12 362.12M667.96 348.53L667.81 361.66M694.34 348.07L694.79 361.21M720.2 347.61L720.17 360.75M746.7 347.14L747.14 360.29M772.76 346.68L772.58 359.83M799.18 346.22L798.26 359.37M825.19 345.76L824.65 358.91M850.72 345.29L850.54 358.45M876.95 344.83L877.48 358M902.94 344.37L903.3 357.54M929.41 343.91L929.15 357.08M955.44 343.44L954.88 356.62M981.15 342.98L981.15 356.16M1007.74 342.52L1007.51 355.7M1033.55 342.06L1033.8 355.24M1059.76 341.59L1059.56 354.79M1086.14 341.13L1086.14 354.33M1111.8 340.67L1112.09 353.87M1138.12 340.21L1138.55 353.41M1164.38 339.75L1163.95 352.95M1190.68 339.28L1189.84 352.49M1216.33 338.82L1216.71 352.03M1242.22 338.36L1242.49 351.58M1268.23 337.9L1268.8 351.12M524.91 364.19L524.79 377.3M551.1 363.73L550.58 376.85M577.06 363.27L577.01 376.39M603.06 362.81L602.95 375.94M629.37 362.35L629.63 375.48M655.18 361.89L655.4 375.03M680.95 361.44L681.54 374.57M707.52 360.98L707.99 374.12M733.76 360.52L733.24 373.66M759.51 360.06L759.8 373.21M785.32 359.6L785.65 372.75M811.53 359.14L811.34 372.3M837.55 358.68L838.22 371.84M863.7 358.23L863.7 371.39M890.01 357.77L890.55 370.93M915.86 357.31L916.14 370.48M942.34 356.85L942.76 370.02M968.66 356.39L968.84 369.57M994.32 355.93L994.4 369.11M1020.49 355.47L1021.06 368.66M1047.07 355.02L1046.28 368.21M1072.54 354.56L1072.48 367.75M1098.69 354.1L1098.88 367.3M1125.07 353.64L1124.72 366.84M1150.7 353.18L1151 366.39M1177.1 352.72L1177.28 365.93M1203.66 352.26L1203.53 365.48M1229.41 351.81L1229.54 365.02M1255.64 351.35L1254.96 364.57M538.12 377.07L538.14 390.19M564.2 376.62L564.26 389.74M589.91 376.16L589.88 389.29M615.78 375.71L616.26 388.83M641.85 375.25L641.68 388.38M668.07 374.8L667.89 387.93M694.27 374.34L693.86 387.48M720.1 373.89L720.08 387.03M746.28 373.43L746.44 386.58M772.32 372.98L773.15 386.13M798.89 372.52L798.38 385.68M824.7 372.07L824.72 385.23M850.89 371.62L850.55 384.78M877.38 371.16L877.69 384.32M903.17 370.71L903.18 383.87M928.97 370.25L928.82 383.42M955.27 369.8L955.12 382.97M981.76 369.34L981.09 382.52M1007.22 368.89L1008.14 382.07M1033.72 368.43L1033.28 381.62M1059.83 367.98L1059.23 381.17M1085.92 367.52L1086.47 380.72M1112.29 367.07L1112.24 380.27M1137.91 366.61L1137.94 379.81M1163.93 366.16L1164.53 379.36M1190.33 365.7L1190.63 378.91M1216.26 365.25L1216.07 378.46M1242.75 364.79L1243.08 378.01M1268.88 364.34L1268.97 377.56M524.95 390.41L524.99 403.53M550.58 389.96L550.82 403.08M576.78 389.51L576.33 402.63M602.62 389.06L602.74 402.19M628.91 388.61L629.33 401.74M655.57 388.16L655.14 401.29M681.65 387.71L681.89 400.84M707.76 387.26L707.24 400.4M733.28 386.81L733.17 399.95M759.36 386.36L759.25 399.5M785.8 385.9L786.18 399.06M812.07 385.45L811.78 398.61M838.02 385L838.26 398.16M863.67 384.55L864.19 397.71M890.43 384.1L890.44 397.27M916.4 383.65L916.17 396.82M942.04 383.2L942.65 396.37M968.27 382.75L968.76 395.92M994.88 382.3L994.38 395.48M1020.52 381.85L1021.14 395.03M1046.88 381.39L1046.3 394.58M1072.5 380.94L1072.38 394.14M1099.22 380.49L1099.27 393.69M1124.72 380.04L1125.39 393.24M1151.48 379.59L1151.29 392.79M1177.08 379.14L1177.26 392.35M1203 378.69L1202.72 391.9M1229.78 378.24L1229.58 391.45M1255.52 377.79L1256.02 391.01M537.75 403.3L538.25 416.42M564.16 402.86L563.55 415.97M589.8 402.41L589.75 415.53M615.89 401.96L616.2 415.09M642.01 401.51L642.1 414.64M668 401.07L668.79 414.2M694.28 400.62L694.35 413.76M720.57 400.17L720.99 413.31M746.54 399.72L747.1 412.87M772.7 399.28L772.74 412.43M798.82 398.83L798.22 411.98M824.85 398.38L824.52 411.54M850.6 397.94L851.36 411.1M876.84 397.49L877.07 410.65M903.38 397.04L903.27 410.21M929.16 396.59L929.32 409.77M955.44 396.15L955.74 409.32M981.18 395.7L981.57 408.88M1007.4 395.25L1007.33 408.44M1033.92 394.81L1033.71 407.99M1059.85 394.36L1060.11 407.55M1086.23 393.91L1085.83 407.11M1112.09 393.46L1112.01 406.66M1138.11 393.02L1138.33 406.22M1164.16 392.57L1164.24 405.78M1190.28 392.12L1190.83 405.33M1216.56 391.68L1216.85 404.89M1242.85 391.23L1242.21 404.45M1268.65 390.78L1269.13 404M524.97 416.64L524.26 429.75M550.5 416.2L550.73 429.31M576.56 415.75L576.59 428.87M602.66 415.31L603.2 428.43M629.33 414.87L629.58 427.99M654.92 414.42L655.46 427.55M681.43 413.98L680.87 427.12M707.71 413.54L707.96 426.68M733.28 413.09L734.04 426.24M759.52 412.65L759.58 425.8M786.09 412.21L786.1 425.36M811.53 411.76L811.72 424.92M837.91 411.32L837.71 424.48M863.76 410.88L863.78 424.04M890.28 410.43L889.52 423.6M916.24 409.99L916.13 423.16M941.91 409.55L942.1 422.72M968.5 409.1L968.41 422.28M994.15 408.66L995.08 421.84M1020.83 408.22L1021.17 421.4M1046.38 407.77L1046.42 420.96M1072.43 407.33L1073.13 420.52M1098.72 406.89L1098.46 420.08M1124.94 406.44L1125.49 419.64M1151.36 406L1150.81 419.2M1176.92 405.56L1177.7 418.76M1203.36 405.11L1203.54 418.32M1229.07 404.67L1228.87 417.88M1255.65 404.23L1255.41 417.44M537.46 429.53L538.33 442.65M564.01 429.09L564.26 442.21M589.67 428.65L590.43 441.78M615.75 428.21L616.54 441.34M642.16 427.77L642.01 440.9M668.34 427.33L668.81 440.47M694.21 426.89L693.96 440.03M720.52 426.46L720.19 439.6M746.29 426.02L746.19 439.16M772.34 425.58L772.34 438.73M798.65 425.14L798.57 438.29M825.11 424.7L824.65 437.85M851 424.26L850.61 437.42M876.98 423.82L876.52 436.98M903 423.38L902.62 436.55M929.49 422.94L929.36 436.11M955.15 422.5L955.37 435.67M981.85 422.06L981.03 435.24M1007.86 421.62L1007.52 434.8M1033.7 421.18L1034.1 434.37M1059.71 420.74L1059.81 433.93M1086.05 420.3L1086.48 433.5M1111.87 419.86L1112.4 433.06M1138.27 419.42L1138.26 432.62M1164.12 418.98L1164.02 432.19M1189.94 418.54L1189.86 431.75M1216.06 418.1L1216.69 431.32M1242.3 417.66L1242.1 430.88M1268.27 417.22L1269.01 430.45M525 442.87L524.9 455.98M550.63 442.43L550.49 455.55M576.73 441.99L576.85 455.11M602.73 441.56L602.93 454.68M628.91 441.12L629.65 454.25M655.58 440.69L655.26 453.82M681.1 440.25L681.86 453.39M707.25 439.82L707.23 452.96M733.1 439.38L733.36 452.52M759.58 438.94L759.6 452.09M785.46 438.51L785.71 451.66M811.4 438.07L811.52 451.23M837.57 437.64L837.78 450.8M863.63 437.2L863.43 450.36M889.94 436.77L889.78 449.93M916.27 436.33L916.24 449.5M942.5 435.89L942.49 449.07M968.57 435.46L968.85 448.64M994.41 435.02L994.29 448.2M1020.99 434.59L1020.18 447.77M1046.88 434.15L1046.87 447.34M1072.44 433.71L1073.2 446.91M1099.21 433.28L1099.05 446.48M1125.19 432.84L1125.37 446.04M1150.81 432.41L1151.13 445.61M1177.2 431.97L1177.6 445.18M1203.54 431.54L1203.69 444.75M1229.47 431.1L1229.87 444.32M1255.65 430.66L1255.73 443.88M537.58 455.76L537.24 468.88M563.61 455.33L563.73 468.45M589.68 454.9L590.4 468.02M616.15 454.47L616.25 467.59M642.3 454.03L642.42 467.16M668.29 453.6L667.7 466.74M694.64 453.17L694.7 466.31M720.5 452.74L720.54 465.88M746.73 452.31L746.08 465.45M772.89 451.87L772.4 465.02M798.46 451.44L798.52 464.6M825.08 451.01L824.55 464.17M851.19 450.58L851.57 463.74M877.1 450.15L876.96 463.31M903.18 449.71L903.42 462.88M929.51 449.28L929.44 462.45M955.51 448.85L954.89 462.03M981.22 448.42L981.2 461.6M1007.79 447.99L1007.37 461.17M1033.75 447.55L1033.11 460.74M1059.45 447.12L1059.52 460.31M1086.04 446.69L1086.13 459.89M1112.14 446.26L1111.75 459.46M1138.11 445.83L1138.06 459.03M1164.17 445.39L1163.74 458.6M1190.61 444.96L1189.94 458.17M1216.78 444.53L1216.92 457.74M1242.11 444.1L1242.45 457.32M1268.86 443.67L1269.16 456.89" stroke="#ffffcc" stroke-width="1.9" fill="none" />
<circle cx="524.7" cy="362.19" r="1.4" fill="#ffffd0"/><circle cx="576.9" cy="361.27" r="1.4" fill="#ffffd0"/><circle cx="629.1" cy="360.35" r="1.4" fill="#ffffd0"/><circle cx="681.3" cy="359.44" r="1.4" fill="#ffffd0"/><circle cx="733.5" cy="358.52" r="1.4" fill="#ffffd0"/><circle cx="785.7" cy="357.6" r="1.4" fill="#ffffd0"/><circle cx="837.9" cy="356.68" r="1.4" fill="#ffffd0"/><circle cx="890.1" cy="355.77" r="1.4" fill="#ffffd0"/><circle cx="942.3" cy="354.85" r="1.4" fill="#ffffd0"/><circle cx="994.5" cy="353.93" r="1.4" fill="#ffffd0"/><circle cx="1046.7" cy="353.02" r="1.4" fill="#ffffd0"/><circle cx="1098.9" cy="352.1" r="1.4" fill="#ffffd0"/><circle cx="1151.1" cy="351.18" r="1.4" fill="#ffffd0"/><circle cx="1203.3" cy="350.26" r="1.4" fill="#ffffd0"/><circle cx="1255.5" cy="349.35" r="1.4" fill="#ffffd0"/><circle cx="524.7" cy="388.41" r="1.4" fill="#ffffd0"/><circle cx="576.9" cy="387.51" r="1.4" fill="#ffffd0"/><circle cx="629.1" cy="386.61" r="1.4" fill="#ffffd0"/><circle cx="681.3" cy="385.71" r="1.4" fill="#ffffd0"/><circle cx="733.5" cy="384.81" r="1.4" fill="#ffffd0"/><circle cx="785.7" cy="383.9" r="1.4" fill="#ffffd0"/><circle cx="837.9" cy="383" r="1.4" fill="#ffffd0"/><circle cx="890.1" cy="382.1" r="1.4" fill="#ffffd0"/><circle cx="942.3" cy="381.2" r="1.4" fill="#ffffd0"/><circle cx="994.5" cy="380.3" r="1.4" fill="#ffffd0"/><circle cx="1046.7" cy="379.39" r="1.4" fill="#ffffd0"/><circle cx="1098.9" cy="378.49" r="1.4" fill="#ffffd0"/><circle cx="1151.1" cy="377.59" r="1.4" fill="#ffffd0"/><circle cx="1203.3" cy="376.69" r="1.4" fill="#ffffd0"/><circle cx="1255.5" cy="375.79" r="1.4" fill="#ffffd0"/><circle cx="524.7" cy="414.64" r="1.4" fill="#ffffd0"/><circle cx="576.9" cy="413.75" r="1.4" fill="#ffffd0"/><circle cx="629.1" cy="412.87" r="1.4" fill="#ffffd0"/><circle cx="681.3" cy="411.98" r="1.4" fill="#ffffd0"/><circle cx="733.5" cy="411.09" r="1.4" fill="#ffffd0"/><circle cx="785.7" cy="410.21" r="1.4" fill="#ffffd0"/><circle cx="837.9" cy="409.32" r="1.4" fill="#ffffd0"/><circle cx="890.1" cy="408.43" r="1.4" fill="#ffffd0"/><circle cx="942.3" cy="407.55" r="1.4" fill="#ffffd0"/><circle cx="994.5" cy="406.66" r="1.4" fill="#ffffd0"/><circle cx="1046.7" cy="405.77" r="1.4" fill="#ffffd0"/><circle cx="1098.9" cy="404.89" r="1.4" fill="#ffffd0"/><circle cx="1151.1" cy="404" r="1.4" fill="#ffffd0"/><circle cx="1203.3" cy="403.11" r="1.4" fill="#ffffd0"/><circle cx="1255.5" cy="402.23" r="1.4" fill="#ffffd0"/><circle cx="524.7" cy="440.87" r="1.4" fill="#ffffd0"/><circle cx="576.9" cy="439.99" r="1.4" fill="#ffffd0"/><circle cx="629.1" cy="439.12" r="1.4" fill="#ffffd0"/><circle cx="681.3" cy="438.25" r="1.4" fill="#ffffd0"/><circle cx="733.5" cy="437.38" r="1.4" fill="#ffffd0"/><circle cx="785.7" cy="436.51" r="1.4" fill="#ffffd0"/><circle cx="837.9" cy="435.64" r="1.4" fill="#ffffd0"/><circle cx="890.1" cy="434.77" r="1.4" fill="#ffffd0"/><circle cx="942.3" cy="433.89" r="1.4" fill="#ffffd0"/><circle cx="994.5" cy="433.02" r="1.4" fill="#ffffd0"/><circle cx="1046.7" cy="432.15" r="1.4" fill="#ffffd0"/><circle cx="1098.9" cy="431.28" r="1.4" fill="#ffffd0"/><circle cx="1151.1" cy="430.41" r="1.4" fill="#ffffd0"/><circle cx="1203.3" cy="429.54" r="1.4" fill="#ffffd0"/><circle cx="1255.5" cy="428.66" r="1.4" fill="#ffffd0"/><circle cx="524.7" cy="467.09" r="1.4" fill="#ffffd0"/><circle cx="576.9" cy="466.24" r="1.4" fill="#ffffd0"/><circle cx="629.1" cy="465.38" r="1.4" fill="#ffffd0"/><circle cx="681.3" cy="464.52" r="1.4" fill="#ffffd0"/><circle cx="733.5" cy="463.67" r="1.4" fill="#ffffd0"/><circle cx="785.7" cy="462.81" r="1.4" fill="#ffffd0"/><circle cx="837.9" cy="461.95" r="1.4" fill="#ffffd0"/><circle cx="890.1" cy="461.1" r="1.4" fill="#ffffd0"/><circle cx="942.3" cy="460.24" r="1.4" fill="#ffffd0"/><circle cx="994.5" cy="459.38" r="1.4" fill="#ffffd0"/><circle cx="1046.7" cy="458.53" r="1.4" fill="#ffffd0"/><circle cx="1098.9" cy="457.67" r="1.4" fill="#ffffd0"/><circle cx="1151.1" cy="456.82" r="1.4" fill="#ffffd0"/><circle cx="1203.3" cy="455.96" r="1.4" fill="#ffffd0"/><circle cx="1255.5" cy="455.1" r="1.4" fill="#ffffd0"/>
<path d="M563.5 330V475M677.5 330V475M791.5 330V475M905.5 330V475M1019.5 330V475M1133.5 330V475M1247.5 330V475M505 417.5H1280" stroke="#ffffb0" stroke-width="1" fill="none" shape-rendering="crispEdges"/>
</g>
<path d="M511 347.6L1275 334L1275 337.8L511 351.4Z" fill="#c4c4c4"/>
<path d="M503 475.8L503 346.8L1283.6 333.2L1283.6 462.3L503 475.8Z" stroke="#ffffff" stroke-width="2" fill="none" />
<path d="M511 347V475.5M1276 333.6V462.3" stroke="#ffffff" stroke-width="2" fill="none" shape-rendering="crispEdges"/>
<path d="M774.5 326V466.5M1036.5 308V461.5" stroke="#ffffe8" stroke-width="1.3" fill="none" />
<g shape-rendering="crispEdges"><path d="M504 289.5H1284M511.5 307.5H1274M503.5 289.5V330M511.5 289.5V330M774.5 307.5V326M1036.5 307.5V326M1274.5 289.5V330M1276.5 307.5V330M1283.5 289.5V330M511.5 503.5H1284M1283.5 482V503.5M511.5 482V503.5M513.5 482V495M1311.5 332.5V455.5M1323.5 332.5V462.5M1289 332.5H1324M1289 337.5H1314M1289 455.5H1318M1289 462.5H1324" stroke="#ffffff" stroke-width="1" fill="none" /></g>
<text x="501" y="288.6" font-size="9.3" textLength="15" lengthAdjust="spacingAndGlyphs" fill="#ffffff" >300</text>
<text x="505" y="306.6" font-size="9.3" textLength="10" lengthAdjust="spacingAndGlyphs" fill="#ffffff" >10</text>
<text x="630" y="306.6" font-size="9.3" textLength="29" lengthAdjust="spacingAndGlyphs" fill="#ffffff" >10,000</text>
<text x="768" y="306.6" font-size="9.3" textLength="10" lengthAdjust="spacingAndGlyphs" fill="#ffffff" >10</text>
<text x="881" y="288.6" font-size="9.3" textLength="28" lengthAdjust="spacingAndGlyphs" fill="#ffffff" >29,100</text>
<text x="893" y="306.6" font-size="9.3" textLength="29" lengthAdjust="spacingAndGlyphs" fill="#ffffff" >10,000</text>
<text x="1031" y="306.6" font-size="9.3" textLength="10" lengthAdjust="spacingAndGlyphs" fill="#ffffff" >10</text>
<text x="1144" y="306.6" font-size="9.3" textLength="24" lengthAdjust="spacingAndGlyphs" fill="#ffffff" >9,000</text>
<text x="1272" y="288.6" font-size="9.3" textLength="15" lengthAdjust="spacingAndGlyphs" fill="#ffffff" >300</text>
<text x="1269" y="306.6" font-size="9.3" textLength="10" lengthAdjust="spacingAndGlyphs" fill="#ffffff" >50</text>
<text x="1275" y="315" font-size="8.5" textLength="9" lengthAdjust="spacingAndGlyphs" fill="#ffffff" >10</text>
<text x="893" y="338.5" font-size="8.5" textLength="26" lengthAdjust="spacingAndGlyphs" fill="#ffffff" font-style="italic">1=67</text>
<text x="503" y="493" font-size="9" textLength="9" lengthAdjust="spacingAndGlyphs" fill="#ffffff" >10</text>
<text x="512" y="503" font-size="9" textLength="9" lengthAdjust="spacingAndGlyphs" fill="#ffffff" >50</text>
<text x="886" y="503.5" font-size="9.3" textLength="28" lengthAdjust="spacingAndGlyphs" fill="#ffffff" >29,400</text>
<text x="1311" y="406" font-size="9.3" textLength="22" lengthAdjust="spacingAndGlyphs" transform="rotate(-90 1311 406)" fill="#ffffff" >4,500</text>
<text x="1323" y="404" font-size="9.3" textLength="22" lengthAdjust="spacingAndGlyphs" transform="rotate(-90 1323 404)" fill="#ffffff" >4,698</text>
<text x="1311" y="342" font-size="8" textLength="12.5" lengthAdjust="spacingAndGlyphs" transform="rotate(-90 1311 342)" fill="#ffffff" >198</text>
<text x="1323" y="466" font-size="8" textLength="13" lengthAdjust="spacingAndGlyphs" transform="rotate(-90 1323 466)" fill="#ffffff" >250</text>
<text x="841" y="264.5" font-size="14.6" textLength="64" lengthAdjust="spacingAndGlyphs" fill="#ffffff"  stroke="#212830" stroke-width=".28">¥Ö¥í¥Ã¥</text>
<path d="M907 253H917" stroke="#ffffff" stroke-width="1" fill="none" />
<text x="918" y="264.5" font-size="14.6" textLength="20" lengthAdjust="spacingAndGlyphs" fill="#ffffff"  stroke="#212830" stroke-width=".28">Õ è</text>
<path d="M938 264.5H947" stroke="#ffffff" stroke-width="1" fill="none" />
<text x="950" y="264.5" font-size="14.6" textLength="11" lengthAdjust="spacingAndGlyphs" fill="#ffffff"  stroke="#212830" stroke-width=".28">‡í</text>
<text x="937" y="276.5" font-size="14" textLength="57" lengthAdjust="spacingAndGlyphs" fill="#ffffff"  stroke="#212830" stroke-width=".28">S=1:100</text>
<text x="508" y="566.5" font-size="14.6" textLength="64" lengthAdjust="spacingAndGlyphs" fill="#ffffff"  stroke="#212830" stroke-width=".28">¥Ö¥í¥Ã¥</text>
<path d="M574 555H583" stroke="#ffffff" stroke-width="1" fill="none" />
<text x="584" y="566.5" font-size="14.6" textLength="90" lengthAdjust="spacingAndGlyphs" fill="#ffffff"  stroke="#212830" stroke-width=".28">¢òÉ œÊ¶Ãæ‡í</text>
<text x="608" y="579.5" font-size="14" textLength="51" lengthAdjust="spacingAndGlyphs" fill="#ffffff"  stroke="#212830" stroke-width=".28">S=1:50</text>
<text x="772" y="566.5" font-size="14.6" textLength="104" lengthAdjust="spacingAndGlyphs" fill="#ffffff"  stroke="#212830" stroke-width=".28">»ù¸µÄ¥Ö¥í¥Ã¥</text>
<path d="M878 555H887" stroke="#ffffff" stroke-width="1" fill="none" />
<text x="888" y="566.5" font-size="14.6" textLength="42" lengthAdjust="spacingAndGlyphs" fill="#ffffff"  stroke="#212830" stroke-width=".28">Ö"¼š‡í</text>
<text x="852" y="579.5" font-size="14" textLength="50" lengthAdjust="spacingAndGlyphs" fill="#ffffff"  stroke="#212830" stroke-width=".28">S=1:20</text>
<text x="1080" y="566.5" font-size="14.6" textLength="64" lengthAdjust="spacingAndGlyphs" fill="#ffffff"  stroke="#212830" stroke-width=".28">¥Ö¥í¥Ã¥</text>
<path d="M1146 555H1155" stroke="#ffffff" stroke-width="1" fill="none" />
<text x="1156" y="566.5" font-size="14.6" textLength="70" lengthAdjust="spacingAndGlyphs" fill="#ffffff"  stroke="#212830" stroke-width=".28">¢òÐÍÒŽ¸ñ‡í</text>
<text x="1165" y="579.5" font-size="14" textLength="51" lengthAdjust="spacingAndGlyphs" fill="#ffffff"  stroke="#212830" stroke-width=".28">S=1:30</text>
<text x="1256" y="518" font-size="12.6" textLength="52" lengthAdjust="spacingAndGlyphs" fill="#ffffff"  stroke="#212830" stroke-width=".28">¥Ö¥í¥Ã¥</text>
<path d="M1310 508H1317" stroke="#ffffff" stroke-width="1" fill="none" />
<text x="1319" y="518" font-size="12.6" textLength="38" lengthAdjust="spacingAndGlyphs" fill="#ffffff"  stroke="#212830" stroke-width=".28">ËýÁ¿±í</text>
<text x="532" y="334" font-size="8.4" textLength="32" lengthAdjust="spacingAndGlyphs" fill="#ffffff" >»û±¾Ðí</text>
<path d="M532 335.3H560" stroke="#ffffff" stroke-width="1" fill="none" />
<text x="461" y="343.3" font-size="8.4" textLength="46" lengthAdjust="spacingAndGlyphs" fill="#ffffff" >»û±¾Ðí/2Ðí</text>
<path d="M461 344.6H500" stroke="#ffffff" stroke-width="1" fill="none" />
<text x="461" y="357" font-size="8.4" textLength="36" lengthAdjust="spacingAndGlyphs" fill="#ffffff" >Ð¡¿ÚÖ¹¤á</text>
<path d="M461 358.3H492" stroke="#ffffff" stroke-width="1" fill="none" />
<text x="646" y="336" font-size="8.4" textLength="56" lengthAdjust="spacingAndGlyphs" fill="#ffffff" >Ë®’iƒ¤¥Ñ¥¤¥×</text>
<path d="M646 337.3H700" stroke="#ffffff" stroke-width="1" fill="none" />
<text x="777" y="325.8" font-size="8.4" textLength="79" lengthAdjust="spacingAndGlyphs" fill="#ffffff" >ÖÐµ¥³¥ó¥¯¥ê©`¥È</text>
<path d="M777 327.1H846" stroke="#ffffff" stroke-width="1" fill="none" />
<text x="432" y="412.4" font-size="8.4" textLength="77.5" lengthAdjust="spacingAndGlyphs" fill="#ffffff" >ÐÐµ¥³¥ó¥¯¥ê©`¥È</text>
<path d="M432 413.7H496" stroke="#ffffff" stroke-width="1" fill="none" />
<text x="469.3" y="485.4" font-size="8.4" textLength="31" lengthAdjust="spacingAndGlyphs" fill="#ffffff" >Ä¿µØ²Ä</text>
<path d="M469 486.7H501" stroke="#ffffff" stroke-width="1" fill="none" />
<text x="693" y="498" font-size="8.4" textLength="84" lengthAdjust="spacingAndGlyphs" fill="#ffffff" >»ùµ¥³¥ó¥¯¥ê©`¥È</text>
<path d="M693 499.3H760" stroke="#ffffff" stroke-width="1" fill="none" />
<text x="795" y="488.5" font-size="8.4" textLength="32" lengthAdjust="spacingAndGlyphs" fill="#ffffff" >Ä¿µØ²Ä</text>
<path d="M795 489.8H827" stroke="#ffffff" stroke-width="1" fill="none" />
<text x="1054" y="488.5" font-size="8.4" textLength="32" lengthAdjust="spacingAndGlyphs" fill="#ffffff" >Ä¿µØ²Ä</text>
<path d="M1054 489.8H1086" stroke="#ffffff" stroke-width="1" fill="none" />
<text x="1236" y="479.5" font-size="8.4" textLength="32" lengthAdjust="spacingAndGlyphs" fill="#ffffff" >Ä¿µØ²Ä</text>
<path d="M1236 480.8H1268" stroke="#ffffff" stroke-width="1" fill="none" />
<text x="1294.7" y="321.6" font-size="8.4" textLength="37" lengthAdjust="spacingAndGlyphs" fill="#ffffff" >Ð¡¿ÚÖ¹¤á</text>
<path d="M1294.7 322.9H1328" stroke="#ffffff" stroke-width="1" fill="none" />
<text x="1298" y="357.5" font-size="8.4" textLength="78" lengthAdjust="spacingAndGlyphs" fill="#ffffff" >ÐÐµ¥³¥ó¥¯¥ê©`¥È</text>
<path d="M1298 358.8H1361" stroke="#ffffff" stroke-width="1" fill="none" />
<path d="M532 335.5L523 351M489 346L497 358M497 358L516 377M492 359.5L507 368M646 337.5L628 361M777 328L755 344M496 413.7L510.5 447M501 486.7L511 470M693 499.5L670 470M795 490L776 466M1054 490L1040 463M1268 481L1277 458M1294.7 322.9L1283 336M1298 359L1276 376" stroke="#ffffff" stroke-width="1" fill="none" />
<path d="M580 886.7L685.8 672.8" stroke="#ffffff" stroke-width="2.2" fill="none" /><path d="M567.01 882.51L677.25 659.64" stroke="#ffffff" stroke-width="1.6" fill="none" /><path d="M566.72 877.9L674.3 660.42" stroke="#ffffff" stroke-width="2.4" fill="none" stroke-dasharray="1.200 1.300"/><path d="M564.75 876.93L672.33 659.44M558.92 871.81L662.94 661.49M554.88 869.81L658.91 659.5" stroke="#ffffff" stroke-width="1" fill="none" /><path d="M549.53 873.86L547.73 870.74L556.38 853.25Q557.71 850.56 560.4 851.89L567.12 854.1M549.53 873.86L562.98 880.51M561.29 850.1L559.49 846.97L568.14 829.48Q569.47 826.79 572.16 828.12L578.88 830.33M561.29 850.1L574.73 856.75M573.04 826.33L571.24 823.21L579.89 805.71Q581.22 803.02 583.91 804.35L590.63 806.56M573.04 826.33L586.49 832.98M569.8 824.1H596.8M568.8 826.6H595.8M584.8 802.56L583 799.44L591.65 781.95Q592.98 779.26 595.67 780.59L602.39 782.8M584.8 802.56L598.25 809.21M596.56 778.8L594.75 775.67L603.41 758.18Q604.74 755.49 607.42 756.82L614.14 759.03M596.56 778.8L610 785.45M593.31 776.57H620.31M592.31 779.07H619.31M608.31 755.03L606.51 751.91L615.16 734.41Q616.49 731.72 619.18 733.05L625.9 735.26M608.31 755.03L621.76 761.68M620.07 731.26L618.26 728.14L626.92 710.65Q628.25 707.96 630.94 709.29L637.65 711.5M620.07 731.26L633.51 737.91M616.82 729.04H643.82M615.82 731.54H642.82M631.82 707.5L630.02 704.37L638.67 686.88Q640 684.19 642.69 685.52L649.41 687.73M631.82 707.5L645.27 714.15M643.58 683.73L641.78 680.61L650.43 663.11Q651.76 660.42 654.45 661.75L661.16 663.96M643.58 683.73L657.02 690.38M640.33 681.5H667.33M639.33 684H666.33" stroke="#ffffff" stroke-width="1.3" fill="none" /><path d="M650.44 665.35L653.54 659.08L669.68 667.06L666.57 673.33Z" fill="#cfcfcf"/><path d="M655 657.5L676 657.5L686 672.8M655 657.5L651 664" stroke="#ffffff" stroke-width="1.6" fill="none" /><path d="M539.5 877L539.5 890.5L577.5 890.5L580.5 886.5M539.5 877.5L563 886L580 886.7M539.5 877L548 877" stroke="#ffffff" stroke-width="2" fill="none" /><path d="M565 886L572 880L578 884" stroke="#ffffff" stroke-width="1.2" fill="none" /><path d="M520.85 859.67L627.54 643.98M530.26 864.33L634.07 654.46M519.06 858.79L545.05 871.65M625.74 643.1L651.74 655.95M631.83 653.36L647.06 660.89M656.21 655.93L676.61 614.7M680.34 650.02L694.08 622.23M694.67 654.87L707.08 629.78M673.93 615.61L708.88 632.9" stroke="#ffffff" stroke-width="1" fill="none" /><g shape-rendering="crispEdges"><path d="M501.5 657.5H615M501.5 657.5V877.5M501.5 877.5H536" stroke="#ffffff" stroke-width="1" fill="none" /></g><text x="500" y="780" font-size="9.5" textLength="23" lengthAdjust="spacingAndGlyphs" transform="rotate(-90 500 780)" fill="#ffffff" >4,200</text><text x="570.5" y="757.05" font-size="9.5" textLength="24" lengthAdjust="spacingAndGlyphs" transform="rotate(-63.68 570.5 757.05)" fill="#ffffff" >3,898</text><text x="575.04" y="772.68" font-size="9.5" textLength="24" lengthAdjust="spacingAndGlyphs" transform="rotate(-63.68 575.04 772.68)" fill="#ffffff" >4,500</text><text x="583.14" y="785.62" font-size="9.5" textLength="24" lengthAdjust="spacingAndGlyphs" transform="rotate(-63.68 583.14 785.62)" fill="#ffffff" >1:0.5</text><text x="629.39" y="658.28" font-size="8" textLength="13" lengthAdjust="spacingAndGlyphs" transform="rotate(-63.68 629.39 658.28)" fill="#ffffff" >198</text><text x="677.5" y="615.14" font-size="9" textLength="34" lengthAdjust="spacingAndGlyphs" transform="rotate(26.32 677.5 615.14)" fill="#ffffff" >350 300</text><text x="700" y="694" font-size="8.4" textLength="77" lengthAdjust="spacingAndGlyphs" fill="#ffffff" >Ìì¶Ë¥³¥ó¥¯¥ê©`¥È</text><path d="M700 695.5H765M700 695.5L685 676" stroke="#ffffff" stroke-width="1" fill="none" /><text x="700" y="707" font-size="8.4" textLength="77" lengthAdjust="spacingAndGlyphs" fill="#ffffff" >ÐÐµ¥³¥ó¥¯¥ê©`¥È</text><path d="M700 708.5H765M700 708.5L680 684" stroke="#ffffff" stroke-width="1" fill="none" /><text x="654" y="757.5" font-size="8.4" textLength="55" lengthAdjust="spacingAndGlyphs" fill="#ffffff" >Ë®’iƒ¤¥Ñ¥¤¥×</text><path d="M654 758.5H702M654 758.5L636 742" stroke="#ffffff" stroke-width="1" fill="none" /><text x="654" y="766.5" font-size="9" textLength="21" lengthAdjust="spacingAndGlyphs" fill="#ffffff" >VP50</text><text x="655" y="799" font-size="8.4" textLength="34" lengthAdjust="spacingAndGlyphs" fill="#ffffff" >ÑY‰z²Ä</text><path d="M655 800.5H688M655 800.5L634 756" stroke="#ffffff" stroke-width="1" fill="none" /><text x="656" y="808" font-size="9" textLength="29" lengthAdjust="spacingAndGlyphs" fill="#ffffff" >RC−80</text><text x="629" y="843.5" font-size="8.4" textLength="66" lengthAdjust="spacingAndGlyphs" fill="#ffffff" >ÆTµ×¥³¥ó¥¯¥ê©`¥È</text><path d="M629 845H695M629 845L600 806" stroke="#ffffff" stroke-width="1" fill="none" /><path d="M631 751L637 757L644 754M633 748L640 751" stroke="#ffffff" stroke-width="1.4" fill="none" /><text x="467" y="922" font-size="8.4" textLength="83" lengthAdjust="spacingAndGlyphs" fill="#ffffff" >»ùµ¥³¥ó¥¯¥ê©`¥È</text><path d="M467 923.5H530M530 923.5L548 888" stroke="#ffffff" stroke-width="1" fill="none" /><text x="472" y="931" font-size="9" textLength="38" lengthAdjust="spacingAndGlyphs" fill="#ffffff" >18−8−40</text>
<path d="M802.5 655.5L802.5 622.5L815.5 622.5L859 642.5L859 655.5" stroke="#ffffff" stroke-width="1.3" fill="none" /><path d="M802.5 622V656" stroke="#ffffff" stroke-width="2.2" fill="none" /><path d="M802 655.5H859" stroke="#ffffff" stroke-width="1.6" fill="none" /><g shape-rendering="crispEdges"><path d="M802 602.5H859M802.5 602.5V619M815.5 602.5V619M859.5 602.5V619M782.5 622.5V655.5M782 622.5H799M782 655.5H799M878.5 622.5V655.5M861 622.5H879M861 642.5H879M861 655.5H879M802 673.5H859M802.5 658V674M859.5 658V674" stroke="#ffffff" stroke-width="1" fill="none" /></g><text x="802" y="601" font-size="8.5" textLength="14" lengthAdjust="spacingAndGlyphs" fill="#ffffff" >100</text><text x="830" y="601" font-size="8.5" textLength="16" lengthAdjust="spacingAndGlyphs" fill="#ffffff" >330</text><text x="824" y="672.5" font-size="8.5" textLength="15" lengthAdjust="spacingAndGlyphs" fill="#ffffff" >430</text><text x="781" y="646" font-size="8" textLength="14" lengthAdjust="spacingAndGlyphs" transform="rotate(-90 781 646)" fill="#ffffff" >250</text><text x="877" y="639" font-size="8" textLength="13" lengthAdjust="spacingAndGlyphs" transform="rotate(-90 877 639)" fill="#ffffff" >150</text><text x="877" y="655" font-size="8" textLength="11" lengthAdjust="spacingAndGlyphs" transform="rotate(-90 877 655)" fill="#ffffff" >100</text>
<rect x="980.3" y="647.7" width="88" height="2.600" fill="#fff"/><path d="M980.3 650L980.3 654.5L993.6 657.5L993.6 668L981.5 673.2L981.5 679.5M1068.3 650L1068.3 654.5L1055 657.5L1055 668L1067.1 673.2L1067.1 679.5M980.8 679.5H1067.8" stroke="#ffffff" stroke-width="1.6" fill="none" /><path d="M983.3 648v-2q0-2 2-2h14q2 0 2 2v2M1004.3 648v-2q0-2 2-2h37q2 0 2 2v2M1048.3 648v-2q0-2 2-2h14q2 0 2 2v2" stroke="#ffffff" stroke-width="1.5" fill="none" /><path d="M999.8 656.5h7v14h-7zM1001.8 659h3v8h-3zM1042.8 656.5h7v14h-7zM1044.8 659h3v8h-3z" stroke="#ffffff" stroke-width="1.3" fill="none" /><path d="M1012.8 658.5L1009.8 672.5L1039.8 672.5L1036.8 658.5Z" stroke="#ffffff" stroke-width="1.6" fill="none" /><path d="M980.3 626H1068.3M980.5 626V646.5M1068 626V646.5M1011.3 672L1011.3 635.5L1037.3 635.5L1037.3 672M1007.3 689H1066.8M1007.5 670V689M1040.5 670V689M1048.5 670V689M1066.5 678V689" stroke="#ffffff" stroke-width="1" fill="none" /><text x="1019.3" y="625" font-size="7.5" textLength="13" lengthAdjust="spacingAndGlyphs" fill="#ffffff" >998</text><text x="1019.3" y="635" font-size="7.5" textLength="13" lengthAdjust="spacingAndGlyphs" fill="#ffffff" >288</text><text x="1020.3" y="688" font-size="7.5" textLength="13" lengthAdjust="spacingAndGlyphs" fill="#ffffff" >398</text><text x="1042.3" y="688" font-size="7.5" textLength="23" lengthAdjust="spacingAndGlyphs" fill="#ffffff" >75 205</text><rect x="1022.8" y="651.5" width="3" height="3" fill="#fff"/><path d="M1024.3 653L1063 617M1063 617H1103.3" stroke="#ffffff" stroke-width="1" fill="none" /><text x="1064.3" y="616" font-size="7.8" textLength="51" lengthAdjust="spacingAndGlyphs" fill="#ffffff" >µõ¤ê¶â¶ñÅù¥¢¥ó</text><text x="1068.3" y="622.5" font-size="7" textLength="22" lengthAdjust="spacingAndGlyphs" fill="#ffffff" >1Ø14Ö</text><text x="1012.8" y="616" font-size="8.4" textLength="32" lengthAdjust="spacingAndGlyphs" fill="#ffffff" >Àµ½ÌÃæ‡í</text><text x="1067.6" y="599" font-size="8.4" textLength="30" lengthAdjust="spacingAndGlyphs" fill="#ffffff" >»û±¾Ðí</text>
<rect x="1204.5" y="647.7" width="43.7" height="2.600" fill="#fff"/><path d="M1204.5 650L1204.5 654.5L1217.8 657.5L1217.8 668L1205.7 673.2L1205.7 679.5M1205 679.5H1248.2M1247.9 673V680" stroke="#ffffff" stroke-width="1.6" fill="none" /><path d="M1207.5 648v-2q0-2 2-2h14q2 0 2 2v2M1230.5 648v-2q0-2 2-2h16" stroke="#ffffff" stroke-width="1.5" fill="none" /><path d="M1224 656.5h7v14h-7zM1226 659h3v8h-3z" stroke="#ffffff" stroke-width="1.3" fill="none" /><path d="M1248.2 657.5H1238.5Q1234.5 664 1237.5 672.5H1248.2" stroke="#ffffff" stroke-width="1.9" fill="none" /><rect x="1225.5" y="650.5" width="3" height="4" fill="#fff"/><rect x="1255.4" y="647.7" width="43.4" height="2.600" fill="#fff"/><path d="M1298.8 650L1298.8 654.5L1285.5 657.5L1285.5 668L1297.6 673.2L1297.6 679.5M1255.4 679.5H1298.3" stroke="#ffffff" stroke-width="1.6" fill="none" /><path d="M1255.4 644h16q2 0 2 2v2M1278.4 648v-2q0-2 2-2h14q2 0 2 2v2" stroke="#ffffff" stroke-width="1.5" fill="none" /><path d="M1274.9 656.5h6v14h-6zM1276.9 659h2.500v8h-2.500z" stroke="#ffffff" stroke-width="1.3" fill="none" /><path d="M1255.4 657.5H1267.4Q1272.4 664 1269.4 672.5H1255.4" stroke="#ffffff" stroke-width="1.9" fill="none" /><path d="M1255.8 632.5V694" stroke="#ffffff" stroke-width="1.8" fill="none" /><path d="M1255.4 632.5H1298.8M1298.5 632.5V647M1255.4 694H1298.8M1273.8 670V694M1280.4 670V694M1298.5 679V694" stroke="#ffffff" stroke-width="1" fill="none" /><text x="1272.4" y="631.5" font-size="7.5" textLength="13" lengthAdjust="spacingAndGlyphs" fill="#ffffff" >499</text><text x="1257.4" y="667" font-size="7.5" textLength="12" lengthAdjust="spacingAndGlyphs" fill="#ffffff" >146</text><text x="1260.4" y="693" font-size="7.5" textLength="36" lengthAdjust="spacingAndGlyphs" fill="#ffffff" >204 75 205</text><circle cx="1276.800" cy="652.900" r="1.600" fill="#fff"/><path d="M1276.8 652.9L1314.4 617M1314.4 617H1354.5" stroke="#ffffff" stroke-width="1" fill="none" /><text x="1316" y="616" font-size="7.8" textLength="51" lengthAdjust="spacingAndGlyphs" fill="#ffffff" >µõ¤ê¶â¶ñÅù¥¢¥ó</text><text x="1322" y="622.5" font-size="7" textLength="22" lengthAdjust="spacingAndGlyphs" fill="#ffffff" >1Ø14Ö</text><text x="1241.5" y="616" font-size="8.4" textLength="32" lengthAdjust="spacingAndGlyphs" fill="#ffffff" >Àµ½ÌÃæ‡í</text><text x="1283" y="599.5" font-size="8.4" textLength="45" lengthAdjust="spacingAndGlyphs" fill="#ffffff" >»û±¾Ðí/2Ðí</text>
<rect x="980.500" y="713.500" width="88" height="44" fill="#ffff00"/><path d="M981.7 713V758M1067.5 713V758" stroke="#ffffff" stroke-width="2.6" fill="none" /><path d="M980.5 714H1068.5" stroke="#ffffff" stroke-width="1.6" fill="none" /><path d="M980.5 757.3H1068.5" stroke="#ffffff" stroke-width="1.3" fill="none" /><path d="M1008 715C1010 723 1013 727 1018 729.500C1030 726 1040 729 1046 727.500C1051 723 1053 719 1054 715M1018 729.500C1014 738 1012 742 1010 744.500C1000 740 990 742 984 744.500M1010 744.500C1009 750 1007 753 1005 756.500M1046 727.500C1043 736 1043 743 1047 749C1048 752 1049 754 1051 756.500" stroke="#ffffa8" stroke-width="2.6" fill="none" /><path d="M999 713.500l1.500-3h4.500l1.500 3M1042.500 713.500l1.500-3h4.500l1.500 3" stroke="#ffffff" stroke-width="1.3" fill="none" /><g shape-rendering="crispEdges"><path d="M1069 714.5H1085M1069 757.5H1085M1084.5 714.5V757.5" stroke="#ffffff" stroke-width="1" fill="none" /></g><text x="1083" y="741.5" font-size="7.5" textLength="12" lengthAdjust="spacingAndGlyphs" transform="rotate(-90 1083 741.5)" fill="#ffffff" >498</text><text x="1012" y="705.5" font-size="8.4" textLength="28" lengthAdjust="spacingAndGlyphs" fill="#ffffff" >ÕýÃæ‡í</text><rect x="1204.5" y="713.500" width="44" height="44" fill="#00ff00"/><path d="M1205.7 713V758M1247.3 713V758" stroke="#ffffff" stroke-width="2.4" fill="none" /><path d="M1204.5 714H1248.5" stroke="#ffffff" stroke-width="1.6" fill="none" /><path d="M1204.5 757.3H1248.5" stroke="#ffffff" stroke-width="1.3" fill="none" /><rect x="1255" y="713.500" width="44" height="44" fill="#00ff00"/><path d="M1256.2 713V758M1297.8 713V758" stroke="#ffffff" stroke-width="2.4" fill="none" /><path d="M1255 714H1299" stroke="#ffffff" stroke-width="1.6" fill="none" /><path d="M1255 757.3H1299" stroke="#ffffff" stroke-width="1.3" fill="none" /><path d="M1235 715C1237 723 1240 727 1244 729.500L1247.500 728.500M1244 729.500C1240 738 1238 742 1237 744.500C1227 740 1217 742 1207 744.500M1237 744.500C1236 750 1234 753 1232 756.500M1256.500 728.500C1262 727 1268 729 1273 727.500C1278 723 1279 719 1280 715M1273 727.500C1270 736 1270 743 1274 749C1275 752 1276 754 1277 756.500" stroke="#b4ffb4" stroke-width="2.6" fill="none" /><path d="M1224 713.500l1.500-3h4.500l1.500 3M1274.500 713.500l1.500-3h4.500l1.500 3" stroke="#ffffff" stroke-width="1.3" fill="none" /><g shape-rendering="crispEdges"><path d="M1300 714.5H1312M1300 757.5H1312M1311.5 714.5V757.5" stroke="#ffffff" stroke-width="1" fill="none" /></g><text x="1310" y="741.5" font-size="7.5" textLength="12" lengthAdjust="spacingAndGlyphs" transform="rotate(-90 1310 741.5)" fill="#ffffff" >498</text><text x="1240" y="705.5" font-size="8.4" textLength="28" lengthAdjust="spacingAndGlyphs" fill="#ffffff" >ÕýÃæ‡í</text>
<g shape-rendering="crispEdges"><path d="M1115.3 708.6V760.6M1123.4 702.8V768.8M1148.8 712.6V756M1152.9 702.8V768.8M1158 716V753.5M1174.3 712V756.3M1141.3 751.4V767.6M1146 751.4V783.8M1135.5 753.7V767.6M1123.4 702.8H1152.9M1134.4 709.1H1166.8M1114.3 712.3H1174.8M1135.5 752H1166.8M1114.3 756H1174.8M1121 768.2H1155.8M1132 783.8H1146" stroke="#ffffff" stroke-width="1" fill="none" /></g><path d="M1129.2 712.6V754.9" stroke="#ffffff" stroke-width="2.3" fill="none" /><path d="M1133.5 702.8V783.8" stroke="#ffffff" stroke-width="2.8" fill="none" /><path d="M1145.1 702.8V756" stroke="#ffffff" stroke-width="1.8" fill="none" /><path d="M1155.2 754.9V716l2.8 1.500" stroke="#ffffff" stroke-width="1.5" fill="none" /><text x="1129.1" y="689.5" font-size="8.4" textLength="23" lengthAdjust="spacingAndGlyphs" fill="#ffffff" >¶Ãæ‡í</text><text x="1129.7" y="697.8" font-size="7.6" textLength="20" lengthAdjust="spacingAndGlyphs" fill="#ffffff" >145.4</text><text x="1119.3" y="703.4" font-size="7.4" textLength="14" lengthAdjust="spacingAndGlyphs" fill="#ffffff" >104.1</text><text x="1143" y="703.4" font-size="7.4" textLength="14.5" lengthAdjust="spacingAndGlyphs" fill="#ffffff" >85.5</text><text x="1122.2" y="768" font-size="7.4" textLength="32" lengthAdjust="spacingAndGlyphs" fill="#ffffff" >100 70 85</text><text x="1130.3" y="775.2" font-size="7" textLength="17.5" lengthAdjust="spacingAndGlyphs" fill="#ffffff" >40 40</text><text x="1134.5" y="783" font-size="7" textLength="11" lengthAdjust="spacingAndGlyphs" fill="#ffffff" >150</text><text x="1114.5" y="718" font-size="7" textLength="8.5" lengthAdjust="spacingAndGlyphs" transform="rotate(-90 1114.5 718)" fill="#ffffff" >25</text><text x="1114.5" y="762.5" font-size="7" textLength="8.5" lengthAdjust="spacingAndGlyphs" transform="rotate(-90 1114.5 762.5)" fill="#ffffff" >25</text><text x="1114.5" y="740.5" font-size="7" textLength="11.5" lengthAdjust="spacingAndGlyphs" transform="rotate(-90 1114.5 740.5)" fill="#ffffff" >455</text><text x="1173.5" y="740.5" font-size="7" textLength="11" lengthAdjust="spacingAndGlyphs" transform="rotate(-90 1173.5 740.5)" fill="#ffffff" >498</text><text x="1160.3" y="712" font-size="6.8" textLength="7.5" lengthAdjust="spacingAndGlyphs" fill="#ffffff" >75</text><text x="1160.3" y="757" font-size="6.8" textLength="7.5" lengthAdjust="spacingAndGlyphs" fill="#ffffff" >75</text>
<g shape-rendering="crispEdges"><path d="M1341.8 708.6V760.6M1349.9 702.8V768.8M1375.3 712.6V756M1379.4 702.8V768.8M1384.5 716V753.5M1400.8 712V756.3M1367.8 751.4V767.6M1372.5 751.4V783.8M1362 753.7V767.6M1349.9 702.8H1379.4M1360.9 709.1H1393.3M1340.8 712.3H1401.3M1362 752H1393.3M1340.8 756H1401.3M1347.5 768.2H1382.3M1358.5 783.8H1372.5" stroke="#ffffff" stroke-width="1" fill="none" /></g><path d="M1355.7 712.6V754.9" stroke="#ffffff" stroke-width="2.3" fill="none" /><path d="M1360 702.8V783.8" stroke="#ffffff" stroke-width="2.8" fill="none" /><path d="M1371.6 702.8V756" stroke="#ffffff" stroke-width="1.8" fill="none" /><path d="M1381.7 754.9V716l2.8 1.500" stroke="#ffffff" stroke-width="1.5" fill="none" /><text x="1355.6" y="689.5" font-size="8.4" textLength="23" lengthAdjust="spacingAndGlyphs" fill="#ffffff" >¶Ãæ‡í</text><text x="1356.2" y="697.8" font-size="7.6" textLength="20" lengthAdjust="spacingAndGlyphs" fill="#ffffff" >145.4</text><text x="1345.8" y="703.4" font-size="7.4" textLength="14" lengthAdjust="spacingAndGlyphs" fill="#ffffff" >104.1</text><text x="1369.5" y="703.4" font-size="7.4" textLength="14.5" lengthAdjust="spacingAndGlyphs" fill="#ffffff" >85.5</text><text x="1348.7" y="768" font-size="7.4" textLength="32" lengthAdjust="spacingAndGlyphs" fill="#ffffff" >100 70 85</text><text x="1356.8" y="775.2" font-size="7" textLength="17.5" lengthAdjust="spacingAndGlyphs" fill="#ffffff" >40 40</text><text x="1361" y="783" font-size="7" textLength="11" lengthAdjust="spacingAndGlyphs" fill="#ffffff" >150</text><text x="1341" y="718" font-size="7" textLength="8.5" lengthAdjust="spacingAndGlyphs" transform="rotate(-90 1341 718)" fill="#ffffff" >25</text><text x="1341" y="762.5" font-size="7" textLength="8.5" lengthAdjust="spacingAndGlyphs" transform="rotate(-90 1341 762.5)" fill="#ffffff" >25</text><text x="1341" y="740.5" font-size="7" textLength="11.5" lengthAdjust="spacingAndGlyphs" transform="rotate(-90 1341 740.5)" fill="#ffffff" >455</text><text x="1400" y="740.5" font-size="7" textLength="11" lengthAdjust="spacingAndGlyphs" transform="rotate(-90 1400 740.5)" fill="#ffffff" >498</text><text x="1386.8" y="712" font-size="6.8" textLength="7.5" lengthAdjust="spacingAndGlyphs" fill="#ffffff" >75</text><text x="1386.8" y="757" font-size="6.8" textLength="7.5" lengthAdjust="spacingAndGlyphs" fill="#ffffff" >75</text>
<g shape-rendering="crispEdges"><path d="M982.4 783.2H1067M982.4 783.2V792.5M994.1 783.2V792.5M1021.7 783.2V792.5M1023.4 783.2V792.5M1055.6 783.2V792.5M1067 783.2V792.5M982.4 792.5H1085.1M1085.1 792.5V826.5M1078 826.5H1085.1M1070 820.5H1085.1M980.6 822V841.6M1069 822V841.6M980.6 841.6H1069" stroke="#ffffff" stroke-width="1" fill="none" /></g><path d="M982.4 792.5L982.4 798.6L993.3 803.1L993.3 814.2L981.4 817.5L981.4 821.6M1067 792.5L1067 798.6L1056.1 803.1L1056.1 814.2L1068 817.5L1068 821.6" stroke="#ffffff" stroke-width="1.6" fill="none" /><rect x="980.600" y="821.6" width="88.400" height="2.900" fill="#fff"/><path d="M983 824.400l1.500 3h15l1.500-3M1004 824.400l1.500 3h38l1.500-3M1048 824.400l1.500 3h15l1.500-3" stroke="#ffffff" stroke-width="1.3" fill="none" /><path d="M993.3 802.3H1010M1039.5 802.3H1056.1M993.3 805.2H1010M1039.5 805.2H1056.1M993.3 811.7H1010M1039.5 811.7H1056.1M993.3 814.2H1010M1039.5 814.2H1056.1" stroke="#ffffff" stroke-width="1.1" fill="none" /><path d="M1014.300 797.400h20.700l5 5v6l-3.500 5h-23.700l-3.500-5v-6z" stroke="#ffffff" stroke-width="1.7" fill="none" /><path d="M1016 799.500h17.500l3.500 3.500v5l-2.500 3.500h-19.500l-2.500-3.500v-5z" stroke="#ffffff" stroke-width="1.1" fill="none" stroke-dasharray="2 1"/><path d="M1013 800.500v10M1036.500 800.500v10" stroke="#ffffff" stroke-width="1.2" fill="none" /><path d="M1025.200 801.500h5v6.500h-5zM1025.200 804.700h5M1025 810h5" stroke="#ffffff" stroke-width="1.1" fill="none" /><path d="M1021.700 797V818M1023.400 797V818M1018 811l5 7" stroke="#ffffff" stroke-width="1" fill="none" /><rect x="1016" y="796.300" width="9" height="2.400" fill="#fff"/><text x="983" y="781.8" font-size="7.5" textLength="11.5" lengthAdjust="spacingAndGlyphs" fill="#ffffff" >135</text><text x="1019.8" y="781.8" font-size="7.5" textLength="12.5" lengthAdjust="spacingAndGlyphs" fill="#ffffff" >998</text><text x="1056.4" y="781.8" font-size="7.5" textLength="11" lengthAdjust="spacingAndGlyphs" fill="#ffffff" >135</text><text x="1019.8" y="797" font-size="6.5" textLength="10" lengthAdjust="spacingAndGlyphs" fill="#ffffff" >518</text><text x="1019.8" y="840" font-size="7.5" textLength="12.5" lengthAdjust="spacingAndGlyphs" fill="#ffffff" >998</text><text x="1083.5" y="813.5" font-size="7" textLength="11" lengthAdjust="spacingAndGlyphs" transform="rotate(-90 1083.5 813.5)" fill="#ffffff" >340</text><text x="1013.4" y="776.3" font-size="8.4" textLength="29.5" lengthAdjust="spacingAndGlyphs" fill="#ffffff" >µ×Ãæ‡í</text><path d="M1248.7 792.5L1206 792.5L1206 798.2L1218 802.7L1218 813.8L1204.8 817.5L1204.8 821.6" stroke="#ffffff" stroke-width="1.6" fill="none" /><rect x="1204.400" y="821.6" width="44.300" height="2.900" fill="#fff"/><path d="M1208 824.400l1.500 3h14l1.500-3M1229 824.400l1.500 3h18" stroke="#ffffff" stroke-width="1.3" fill="none" /><path d="M1218 802.3H1234.5M1218 805.2H1234.5M1218 811.7H1234.5M1218 814.2H1234.5" stroke="#ffffff" stroke-width="1.1" fill="none" /><path d="M1248.700 797.500H1239l-5 5v6l3.500 5H1248.700" stroke="#ffffff" stroke-width="1.8" fill="none" /><path d="M1248 799.500H1240l-3.500 3.500v5l2.500 3.500H1248" stroke="#ffffff" stroke-width="1.1" fill="none" stroke-dasharray="2 1"/><path d="M1248 792.5V800M1248 813V828" stroke="#ffffff" stroke-width="2" fill="none" /><g shape-rendering="crispEdges"><path d="M1255.2 785.1H1298.7M1262 785.1V792.5M1286.4 785.1V792.5M1298.7 785.1V792.5M1255.2 785.1V837.5M1255.2 792.5H1312.6M1312.6 792.5V826.5M1305 826.5H1312.6M1301 820.5H1312.6M1255.2 837.5H1300M1300 825V837.5" stroke="#ffffff" stroke-width="1" fill="none" /></g><path d="M1298.7 792.5L1298.7 798.2L1286.8 802.7L1286.8 813.8L1299.5 817.5L1299.5 821.6" stroke="#ffffff" stroke-width="1.6" fill="none" /><rect x="1255.200" y="821.6" width="44.800" height="2.900" fill="#fff"/><path d="M1256 827.400h17l1.500-3M1279 824.400l1.500 3h15l1.500-3" stroke="#ffffff" stroke-width="1.3" fill="none" /><path d="M1270.5 802.3H1286.8M1270.5 805.2H1286.8M1270.5 811.7H1286.8M1270.5 814.2H1286.8" stroke="#ffffff" stroke-width="1.1" fill="none" /><path d="M1255.200 797.500H1265l5 5v6l-3.500 5H1255.200" stroke="#ffffff" stroke-width="1.8" fill="none" /><path d="M1256 799.500H1264l3.500 3.500v5l-2.500 3.500H1256" stroke="#ffffff" stroke-width="1.1" fill="none" stroke-dasharray="2 1"/><path d="M1257 793.500h4.500v5h-4.500zM1257 802h4.500v7.500h-4.500zM1257 805.700h4.500M1256.500 812l5 8M1264 799q3 6 0 13" stroke="#ffffff" stroke-width="1.1" fill="none" /><text x="1265.9" y="784.3" font-size="7.5" textLength="12" lengthAdjust="spacingAndGlyphs" fill="#ffffff" >349</text><text x="1287.2" y="784.3" font-size="7.5" textLength="11.5" lengthAdjust="spacingAndGlyphs" fill="#ffffff" >135</text><text x="1272.5" y="837" font-size="7.5" textLength="12.5" lengthAdjust="spacingAndGlyphs" fill="#ffffff" >499</text><text x="1311.5" y="813.5" font-size="7" textLength="11" lengthAdjust="spacingAndGlyphs" transform="rotate(-90 1311.5 813.5)" fill="#ffffff" >340</text><text x="1240.5" y="776.3" font-size="8.4" textLength="29" lengthAdjust="spacingAndGlyphs" fill="#ffffff" >µ×Ãæ‡í</text>
<rect x="1267" y="544" width="152" height="10.500" fill="#ffff00"/><rect x="1267" y="555" width="152" height="11" fill="#00ff00"/><rect x="1267" y="567" width="152" height="11" fill="#ffff00"/><g shape-rendering="crispEdges"><path d="M1266 578V520H1419.500" stroke="#ffffff" stroke-width="2" fill="none" /><path d="M1419.5 520V578M1315.5 520V578M1266 542.5H1420M1267 554.5H1419M1267 566.5H1419" stroke="#ffffff" stroke-width="1" fill="none" /></g><path d="M1315.5 544V578M1361.5 544V578" stroke="#f8fff0" stroke-width="1" fill="none" /><text x="1271" y="535" font-size="7.6" textLength="46" lengthAdjust="spacingAndGlyphs" fill="#ffffff" >¥Ö¥í¥Ã¥¯¯¢òÐÍ</text><text x="1319" y="535" font-size="7.6" textLength="50" lengthAdjust="spacingAndGlyphs" fill="#ffffff" >¥Ö¥í¥Ã¥¯¯‚€Êý</text><text x="1372" y="528" font-size="7.6" textLength="48" lengthAdjust="spacingAndGlyphs" fill="#ffffff" >Ê©¹¤Ãæ·e¥¯¥ó</text><text x="1369" y="540.5" font-size="7.6" textLength="54" lengthAdjust="spacingAndGlyphs" fill="#ffffff" >¥¯¥ê©`¥ÈÃæ·e(m²)</text><text x="1278" y="553" font-size="8.4" textLength="30" lengthAdjust="spacingAndGlyphs" fill="#ffffa8" >»û±¾Ðí</text><text x="1334" y="553" font-size="8.4" textLength="14" lengthAdjust="spacingAndGlyphs" fill="#ffffa8" >189</text><text x="1386" y="553" font-size="8.4" textLength="11" lengthAdjust="spacingAndGlyphs" fill="#ffffa8" >8.1</text><text x="1273" y="565" font-size="8.4" textLength="44" lengthAdjust="spacingAndGlyphs" fill="#eaffea" >»û±¾Ðí/2Ðí</text><text x="1336" y="565" font-size="8.4" textLength="10" lengthAdjust="spacingAndGlyphs" fill="#f4fff4" >24</text><text x="1385" y="565" font-size="8.4" textLength="12" lengthAdjust="spacingAndGlyphs" fill="#f4fff4" >0.7</text><text x="1275" y="577" font-size="8.4" textLength="28" lengthAdjust="spacingAndGlyphs" fill="#ffffa8" >Ë®’iÐí</text><text x="1336" y="577" font-size="8.4" textLength="10" lengthAdjust="spacingAndGlyphs" fill="#ffffa8" >60</text><text x="1386" y="577" font-size="8.4" textLength="11" lengthAdjust="spacingAndGlyphs" fill="#ffffa8" >3.8</text><g shape-rendering="crispEdges"><path d="M953 865H1147.5V899H953ZM953 887.5H1147.5" stroke="#ffffff" stroke-width="1.5" fill="none" /><path d="M1002.5 865V899M1049.5 865V899M1079 865V899M1106.5 865V899" stroke="#ffffff" stroke-width="1.5" fill="none" /></g><text x="960" y="862" font-size="9.5" textLength="29" lengthAdjust="spacingAndGlyphs" fill="#ffffff" >ÔŽ¸ñ±í</text><text x="977.75" y="878.5" font-size="6.2" text-anchor="middle" textLength="19" lengthAdjust="spacingAndGlyphs" fill="#ffffff" >Ãû³Æ</text><text x="1026" y="873" font-size="6.8" text-anchor="middle" textLength="28" lengthAdjust="spacingAndGlyphs" fill="#ffffff" >ŒÆ·¨¤µ¥à</text><text x="1026" y="884" font-size="6.8" text-anchor="middle" textLength="33" lengthAdjust="spacingAndGlyphs" fill="#ffffff" >‡L×á¥³¥Ð¥ó</text><text x="1064.25" y="873" font-size="6.8" text-anchor="middle" textLength="26" lengthAdjust="spacingAndGlyphs" fill="#ffffff" >¥³¥ó¥¯¥ê</text><text x="1064.25" y="884.5" font-size="7.2" text-anchor="middle" textLength="25" lengthAdjust="spacingAndGlyphs" fill="#ffffff" >Ìå·e(m3)</text><text x="1092.75" y="873" font-size="6.8" text-anchor="middle" textLength="25" lengthAdjust="spacingAndGlyphs" fill="#ffffff" >¥Ö¥í¥Ã¥¯</text><text x="1092.75" y="884.5" font-size="7.2" text-anchor="middle" textLength="24" lengthAdjust="spacingAndGlyphs" fill="#ffffff" >ÖØÁ¿(kg)</text><text x="1130" y="873" font-size="6.8" text-anchor="middle" textLength="42" lengthAdjust="spacingAndGlyphs" fill="#ffffff" >Ê©¹¤Ãæ·e¥¯¥ó</text><text x="1132" y="884.5" font-size="6.8" text-anchor="middle" textLength="46" lengthAdjust="spacingAndGlyphs" fill="#ffffff" >¥¯¥ê©`¥ÈÃæ·e(m²)</text><text x="977.75" y="896.5" font-size="7.4" text-anchor="middle" textLength="22" lengthAdjust="spacingAndGlyphs" fill="#ffffff" >»û±¾Ðí</text><text x="1026" y="896" font-size="7.4" text-anchor="middle" textLength="38" lengthAdjust="spacingAndGlyphs" fill="#ffffff" >499×565×998</text><text x="1064.25" y="896" font-size="7.4" text-anchor="middle" textLength="16" lengthAdjust="spacingAndGlyphs" fill="#ffffff" >0.124</text><text x="1092.75" y="896" font-size="7.4" text-anchor="middle" textLength="11" lengthAdjust="spacingAndGlyphs" fill="#ffffff" >286</text><text x="1127" y="896" font-size="7.4" text-anchor="middle" textLength="16" lengthAdjust="spacingAndGlyphs" fill="#ffffff" >0.048</text><g shape-rendering="crispEdges"><path d="M1207.5 865H1403V899H1207.5ZM1207.5 887.5H1403" stroke="#ffffff" stroke-width="1.5" fill="none" /><path d="M1256.5 865V899M1303.5 865V899M1333.5 865V899M1360.5 865V899" stroke="#ffffff" stroke-width="1.5" fill="none" /></g><text x="1214.5" y="862" font-size="9.5" textLength="29" lengthAdjust="spacingAndGlyphs" fill="#ffffff" >ÔŽ¸ñ±í</text><text x="1232" y="878.5" font-size="6.2" text-anchor="middle" textLength="19" lengthAdjust="spacingAndGlyphs" fill="#ffffff" >Ãû³Æ</text><text x="1280" y="873" font-size="6.8" text-anchor="middle" textLength="28" lengthAdjust="spacingAndGlyphs" fill="#ffffff" >ŒÆ·¨¤µ¥à</text><text x="1280" y="884" font-size="6.8" text-anchor="middle" textLength="33" lengthAdjust="spacingAndGlyphs" fill="#ffffff" >‡L×á¥³¥Ð¥ó</text><text x="1318.5" y="873" font-size="6.8" text-anchor="middle" textLength="26" lengthAdjust="spacingAndGlyphs" fill="#ffffff" >¥³¥ó¥¯¥ê</text><text x="1318.5" y="884.5" font-size="7.2" text-anchor="middle" textLength="25" lengthAdjust="spacingAndGlyphs" fill="#ffffff" >Ìå·e(m3)</text><text x="1347" y="873" font-size="6.8" text-anchor="middle" textLength="25" lengthAdjust="spacingAndGlyphs" fill="#ffffff" >¥Ö¥í¥Ã¥¯</text><text x="1347" y="884.5" font-size="7.2" text-anchor="middle" textLength="24" lengthAdjust="spacingAndGlyphs" fill="#ffffff" >ÖØÁ¿(kg)</text><text x="1384.75" y="873" font-size="6.8" text-anchor="middle" textLength="42" lengthAdjust="spacingAndGlyphs" fill="#ffffff" >Ê©¹¤Ãæ·e¥¯¥ó</text><text x="1386.75" y="884.5" font-size="6.8" text-anchor="middle" textLength="46" lengthAdjust="spacingAndGlyphs" fill="#ffffff" >¥¯¥ê©`¥ÈÃæ·e(m²)</text><text x="1232" y="896.5" font-size="7.4" text-anchor="middle" textLength="30" lengthAdjust="spacingAndGlyphs" fill="#ffffff" >»û±¾Ðí/2Ðí</text><text x="1280" y="896" font-size="7.4" text-anchor="middle" textLength="38" lengthAdjust="spacingAndGlyphs" fill="#ffffff" >499×565×499</text><text x="1318.5" y="896" font-size="7.4" text-anchor="middle" textLength="16" lengthAdjust="spacingAndGlyphs" fill="#ffffff" >0.062</text><text x="1347" y="896" font-size="7.4" text-anchor="middle" textLength="11" lengthAdjust="spacingAndGlyphs" fill="#ffffff" >142</text><text x="1381.75" y="896" font-size="7.4" text-anchor="middle" textLength="16" lengthAdjust="spacingAndGlyphs" fill="#ffffff" >0.025</text>
<g shape-rendering="crispEdges"><path d="M331.5 977.5H340.5V986.5H331.5ZM336 982.5H386" stroke="#ffffff" stroke-width="1" fill="none" /></g>
<path d="M337.5 915L343.5 922L349.5 915M343.5 922V928M390.5 968L403 981M403 968L390.5 981" stroke="#ffffff" stroke-width="0.9" fill="none" />
<rect x="386" y="977" width="60" height="25" rx="2" fill="#2a313e"/>
<rect x="444" y="977" width="1086" height="25" rx="2.500" fill="#c1c1c1"/>
<g shape-rendering="crispEdges"><path d="M449.5 977V982.5M563.5 977V982.5M677.5 977V982.5M791.5 977V982.5M905.5 977V982.5M1019.5 977V982.5M1133.5 977V982.5M1247.5 977V982.5M1361.5 977V982.5" stroke="#f4f4f4" stroke-width="1" fill="none" /></g>
<path d="M389 980h2v2h-2zM389 983h2v2h-2zM389 986h2v2h-2zM389 989h2v2h-2zM389 992h2v2h-2zM389 995h2v2h-2zM392 980h2v2h-2zM392 983h2v2h-2zM392 986h2v2h-2zM392 989h2v2h-2zM392 992h2v2h-2zM392 995h2v2h-2z" fill="#b8b8b8"/>
<path d="M403 986L411 994M411 986L403 994" stroke="#b4b4b4" stroke-width="1.8" fill="none" />
<path d="M424 996.500L432 988.500a3.800 3.800 0 0 1 5-4.500l-2.500 2.500 1 2 2 1 2.500-2.500a3.800 3.800 0 0 1-4.500 5L427 1000z" fill="#a8a8a8" transform="translate(-1,-2.500)"/>
<rect x="448.500" y="984.500" width="15" height="11" fill="none" stroke="#555" stroke-width="1"/><rect x="448" y="984" width="16" height="2.500" fill="#555"/><path d="M451 988.500l2.500 1.500-2.500 1.500M455 992.500h4" stroke="#555" fill="none" stroke-width="1"/><path d="M466 988h8l-4 4z" fill="#666"/><path d="M1519 991h8l-4-4z" fill="#666"/>
<path d="M1851 203.500H1861" stroke="#f4f4f4" stroke-width="3" fill="none" />
<path d="M1871.500 199.500H1878.500V206.500H1871.500Z" stroke="#f4f4f4" stroke-width="2" fill="none" /><path d="M1874.500 198.500V197H1881V203.500H1879.500" stroke="#f4f4f4" stroke-width="1.6" fill="none" />
<path d="M1891.500 198.500L1899 206M1899 198.500L1891.500 206" stroke="#f4f4f4" stroke-width="2.5" fill="none" />
<circle cx="1829" cy="292" r="53.300" fill="none" stroke="#494e59" stroke-width="14.500"/>
<rect x="1803.500" y="266.400" width="51" height="51" fill="#babbc0"/>
<rect x="1813" y="276" width="32" height="31.500" fill="#a7a9b5"/>
</svg>
<div class="a" style="left:1806px;top:380px;width:45px;height:16px;background:#9094a1;border-radius:4px;border:1px solid #a4a8b4;box-sizing:border-box"></div>
<svg class="a" style="left:1836px;top:384px" width="12" height="8" viewBox="0 0 12 8"><path d="M1.500 1.500H10L5.800 6Z" fill="none" stroke="#c4c6cc" stroke-width="1"/></svg>
<div class="a" style="left:1876px;top:422px;width:32px;height:212px;background:#585d67;border-radius:4px;border:1px solid #5f646d;box-sizing:border-box"></div>
<svg class="a" style="left:1876px;top:423px" width="32" height="211" viewBox="0 0 32 211"><g fill="none" stroke="#444953" stroke-width="1.150"><circle cx="26" cy="5.500" r="3"/><path d="M24.500 4l3 3m0-3l-3 3"/><circle cx="16" cy="30" r="10.500"/><circle cx="16" cy="29" r="5.500"/><path d="M7 35q9 7 18 0"/><path d="M13.500 48h5l-2.500 3z" fill="#444953"/><path d="M3 57H29" stroke="#52565f"/><path d="M10 76v-9a1.500 1.500 0 0 1 3 0v6-9a1.500 1.500 0 0 1 3 0v8-8a1.500 1.500 0 0 1 3 0v9-6a1.500 1.500 0 0 1 3 0v12c0 5-3 8-7 8c-4 0-6-2-8-6l-3-5c-1-2 1.500-3 3-1z"/><path d="M6 92L22 108M22 92L6 108M6 92h4M6 92v4M22 92h-4M22 92v4M6 108h4M6 108v-4"/><circle cx="21" cy="108" r="4.500" fill="#585d67"/><path d="M24 111l4 4" stroke-width="2.200"/><path d="M13.500 119h5l-2.500 3z" fill="#444953"/><path d="M16 128v22M12 132l4-5 4 5M13 128h6v20h-6z"/><ellipse cx="16" cy="142" rx="11" ry="4.500"/><path d="M7 146l-3-3 4-1"/><path d="M13.500 158h5l-2.500 3z" fill="#444953"/><path d="M3 165H29" stroke="#52565f"/><path d="M5 170h6v6h-6zM13 170h6v6h-6zM21 170h6v6h-6zM5 180h15v12h-15z"/><path d="M9 182.500l8 3.500-8 3.500z" fill="#444953"/><circle cx="26" cy="204.500" r="3"/><path d="M24.500 204.500h3"/></g></svg>
<svg class="a" style="left:0;top:0" width="1918" height="1037" viewBox="0 0 1918 1037" font-family="'Liberation Sans',sans-serif"><text x="1820.5" y="242.74" font-size="18" fill="#bfc1c6" textLength="17" lengthAdjust="spacingAndGlyphs">北</text><text x="1820.5" y="356.74" font-size="18" fill="#bfc1c6" textLength="17" lengthAdjust="spacingAndGlyphs">南</text><text x="1763.5" y="299.24" font-size="18" fill="#bfc1c6" textLength="18" lengthAdjust="spacingAndGlyphs">西</text><text x="1876.5" y="298.74" font-size="18" fill="#bfc1c6" textLength="18" lengthAdjust="spacingAndGlyphs">東</text><text x="1815" y="299.32" font-size="24" fill="#5c5e68" textLength="28.5" lengthAdjust="spacingAndGlyphs">上</text><text x="1811" y="391.46" font-size="10" fill="#3c3f48" textLength="21" lengthAdjust="spacingAndGlyphs">WCS</text></svg>
</div></body></html>
